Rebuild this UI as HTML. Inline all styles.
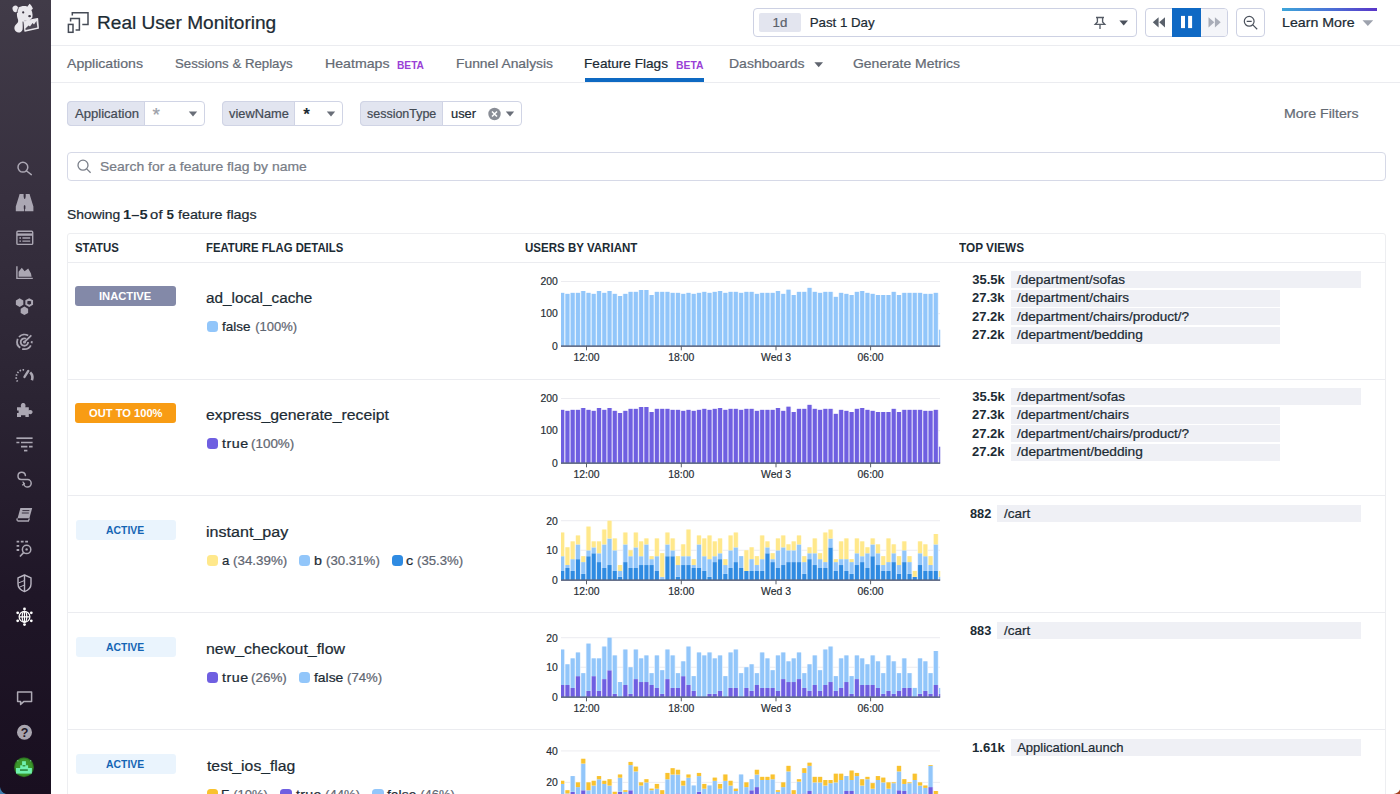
<!DOCTYPE html>
<html><head><meta charset="utf-8"><title>Real User Monitoring</title>
<style>
html,body{margin:0;padding:0;background:#fff;width:1400px;height:794px;overflow:hidden;}
body{width:1400px;height:794px;overflow:hidden;position:relative;font-family:"Liberation Sans",sans-serif;}
.t{position:absolute;white-space:nowrap;line-height:20px;-webkit-text-stroke:0.22px currentColor;}
.b{position:absolute;display:block;}
.root{position:absolute;left:0;top:0;width:1400px;height:794px;overflow:hidden;}
.ax{font-family:"Liberation Sans",sans-serif;font-size:10.4px;fill:#262d34;stroke:#262d34;stroke-width:0.18px;}
</style></head><body>
<div class="root">
<div class="b" style="left:0;top:0;width:51px;height:794px;background:linear-gradient(180deg,#413b48 0%,#37303f 25%,#2b2433 50%,#1f1627 75%,#190f20 100%)"></div>
<svg class="b" style="left:0;top:0" width="51" height="794" viewBox="0 0 51 794" fill="none" stroke="none"><g fill="#e9e7ec"><ellipse cx="15.5" cy="8.9" rx="2.9" ry="3.3" transform="rotate(-20 15.5 8.9)"/><path d="M27.4 6.4L29.6 3.8C31 5 32.4 7 32.9 8.8L30.8 10.6Z"/><path d="M18.6 7.6C21 5.6 26.6 5.2 29.6 7.6C32 9.8 33 14.4 32.4 17.4C31.4 19.6 28 20.8 24.6 20.6L23 22.4L22.6 29.4C21.8 32.6 18.2 33.4 16 31.6C13.8 29.6 14 26.4 16 24.6C17.8 23 18.6 21.6 18 19.6C16.4 16 16.6 10.6 18.6 7.6Z"/></g><path d="M18.3 8.2C17.4 10 17 11.6 17.2 13" stroke="#3f3946" stroke-width="0.9" fill="none"/><path d="M23.8 21.4L37.6 18.7L38.3 28.2L24.8 31.1Z" fill="#e9e7ec" stroke="#e9e7ec" stroke-width="1.2" stroke-linejoin="round"/><path d="M25.6 30L25.4 28.6L28.6 25.4L30 26.6L32.6 23L34 24.6L36.4 21L37.4 27.6Z" fill="#4d4754"/><path d="M22.9 21.6L23.9 31.6" stroke="#3f3946" stroke-width="0.8"/><circle cx="23.2" cy="12.4" r="1.1" fill="#3a3441"/><ellipse cx="29.6" cy="16.2" rx="1.4" ry="1.1" fill="#3a3441"/><g stroke="#aba7b3" stroke-width="1.5" stroke-linecap="round"><circle cx="22.9" cy="167.2" r="4.9"/><path d="M26.6 171L31.3 174.6"/></g><g fill="#aba7b3"><path d="M19.6 194H23.6V196.2L24.2 199.4V211.2H15.8V206.4L18.9 196.4Z"/><path d="M25.6 194H29.6L30.3 196.4L33.4 206.4V211.2H25V199.4L25.6 196.2Z"/><rect x="23" y="198.6" width="3.2" height="7"/></g><rect x="23.8" y="205.2" width="1.6" height="4.2" rx="0.8" fill="#37303f"/><path d="M24.6 194V198.4" stroke="#37303f" stroke-width="1.2"/><g stroke="#aba7b3" stroke-width="1.4"><rect x="16.9" y="231.2" width="15.8" height="13.2" rx="1"/><path d="M16.9 234.6H32.7" stroke-width="2.4"/><path d="M19.4 238H21M22.4 238H30.2M19.4 241.2H21M22.4 241.2H30.2" stroke-width="1.3"/></g><path d="M16.9 266.2V278.4H32.8" stroke="#aba7b3" stroke-width="1.4"/><path d="M18.6 276.8V271.8L21.8 267.8L24.6 271.2L28.2 268.6L31 273.4L31.6 276.8Z" fill="#aba7b3"/><path d="M23.32 304.75L19.60 306.90L15.88 304.75L15.88 300.45L19.60 298.30L23.32 300.45Z" fill="#aba7b3"/><path d="M28.12 312.95L24.40 315.10L20.68 312.95L20.68 308.65L24.40 306.50L28.12 308.65Z" fill="#aba7b3"/><path d="M32.06 304.25L29.20 305.90L26.34 304.25L26.34 300.95L29.20 299.30L32.06 300.95Z" stroke="#aba7b3" stroke-width="2"/><g stroke="#aba7b3" stroke-width="1.8" stroke-linecap="butt"><path d="M28.2 335.6A7.3 7.3 0 1 0 31.7 341.2" stroke-dasharray="10 2.2"/><path d="M26.2 338.8A3.7 3.7 0 1 0 28.1 342"/><path d="M24.6 341.9L30.8 335.8" stroke-width="1.8" stroke-linecap="round"/></g><circle cx="24.5" cy="342" r="1.5" fill="#aba7b3"/><g stroke="#aba7b3" stroke-linecap="butt"><path d="M17.6 381.6A7.4 7.4 0 0 1 24.4 369.9" stroke-width="1.7" stroke-dasharray="1.5 1.5"/><path d="M30.2 372.4A7.4 7.4 0 0 1 31.9 380.2" stroke-width="2.6"/><path d="M24.5 376.9L28.3 370.9" stroke-width="2.4" stroke-linecap="round"/></g><path d="M17 407.2H21.2C20.2 405 21.4 403 23.2 403C25 403 26.2 405 25.2 407.2H28.8V410.4C30.6 409.4 32.6 410.4 32.6 412.1C32.6 413.8 30.6 414.8 28.8 413.8V417H25.4V415.2H21V417H17V413H18.6V410.6H17Z" fill="#aba7b3"/><g stroke="#aba7b3" stroke-width="1.7"><path d="M16.4 438.2H32.6"/><path d="M16.4 442.5H19.4M21 442.5H32.6"/><path d="M21 446.6H27.4M29 446.6H32.6"/><path d="M24 450.6H27.4"/></g><path d="M25.4 475.6A3.7 3.7 0 1 0 21.2 479.6H27.6A3.7 3.7 0 1 1 23.8 483.4" stroke="#aba7b3" stroke-width="1.5" stroke-linecap="round"/><path d="M22.6 481.6L24.4 483.6L22.2 485.2" stroke="#aba7b3" stroke-width="1.2"/><path d="M20.4 508H32.2L29.4 518.2H17.6Z" fill="#aba7b3"/><path d="M17.4 518.4C16.6 519.6 17 521 18.2 521H28.4L29.4 518.6" stroke="#aba7b3" stroke-width="1.3"/><path d="M22.4 510.6H29.4M21.8 513H28.8" stroke="#2b2433" stroke-width="0.9"/><g stroke="#aba7b3"><path d="M16.6 541.6H19.2M20.8 541.6H23.6M25.2 541.6H28" stroke-width="1.8"/><path d="M16.6 545.8H19.2M16.6 550H19.2" stroke-width="1.8"/><circle cx="26.6" cy="549.4" r="4.2" stroke-width="1.5"/><path d="M23.6 552.6L20.4 556" stroke-width="1.7" stroke-linecap="round"/></g><circle cx="26.6" cy="549.4" r="1.2" fill="#aba7b3"/><g stroke="#b9b5c1" stroke-width="1.4" stroke-linejoin="round"><path d="M24.5 575L31 577.8V584C31 587.6 28.4 590.2 24.5 591.6C20.6 590.2 18 587.6 18 584V577.8Z"/><path d="M24.5 575V591.6"/><path d="M24.5 580.5L18.4 583M24.5 585L19.4 587.2" stroke-width="1"/></g><g stroke="#fff" stroke-width="1.2"><circle cx="24.5" cy="616.8" r="5.4"/><ellipse cx="24.5" cy="616.8" rx="2.3" ry="5.4"/><path d="M19.1 616.8H29.9M24.5 611.4V622.2"/></g><g fill="#fff"><circle cx="24.5" cy="609" r="1.4"/><circle cx="24.5" cy="624.6" r="1.4"/><circle cx="17.7" cy="612.8" r="1.4"/><circle cx="31.3" cy="612.8" r="1.4"/><circle cx="17.7" cy="620.8" r="1.4"/><circle cx="31.3" cy="620.8" r="1.4"/></g><path d="M17.6 692H31.6V701.4H24L20.6 704.4V701.4H17.6Z" stroke="#aeaab5" stroke-width="1.5" stroke-linejoin="round"/><circle cx="24.5" cy="732.2" r="7.5" fill="#a9a5af"/><text x="24.5" y="736.7" text-anchor="middle" font-family="Liberation Sans, sans-serif" font-weight="700" font-size="12.5" fill="#1f1726">?</text><defs><radialGradient id="av" cx="50%" cy="50%" r="50%"><stop offset="0" stop-color="#3f9e2e"/><stop offset="0.8" stop-color="#3a962a"/><stop offset="1" stop-color="#245f1c"/></radialGradient></defs><circle cx="24" cy="767.3" r="10" fill="url(#av)"/><g fill="#70f1ae"><rect x="22.1" y="761.2" width="3.8" height="4.2"/><rect x="20.2" y="765.3" width="7.9" height="3"/><rect x="16" y="768" width="15.9" height="5.6"/></g><rect x="20" y="769.4" width="7.8" height="1.3" fill="#1c6f22"/><rect x="22.7" y="765.2" width="2.6" height="1.2" fill="#2a8a30"/><rect x="17.2" y="760.3" width="1.2" height="1" fill="#9ff5c8" opacity="0.8"/><rect x="30" y="760.3" width="1.2" height="1" fill="#9ff5c8" opacity="0.8"/><path d="M0 794V787C0.6 790.6 2.6 793 6 794Z" fill="#3f7fb0"/></svg>
<svg class="b" style="left:60px;top:5px" width="50" height="35" viewBox="60 5 50 35" fill="none" stroke="#454b56" stroke-width="1.5" stroke-linejoin="miter"><path d="M72.3 15.6V12.8H88V24.4H82.3"/><path d="M70.6 21.4V18.4H79.4V30.1H75.6"/><rect x="68.4" y="24.4" width="4.6" height="7.9"/></svg>
<span class="t" style="left:97.37px;top:12.66px;font-size:18px;color:#1c2b34;transform:scaleX(1.0601);transform-origin:0 0;">Real User Monitoring</span>
<div class="b" style="left:51.00px;top:45.00px;width:1349.00px;height:1.00px;background:#ebecf0;"></div>
<div class="b" style="left:753.00px;top:8.00px;width:383.50px;height:29.00px;background:#fff;border:1px solid #cdd1e3;box-sizing:border-box;border-radius:4px;"></div>
<div class="b" style="left:759.00px;top:13.00px;width:42.00px;height:19.00px;background:#e3e5ef;border-radius:2px;"></div>
<span class="t" style="left:680.00px;width:200px;text-align:center;top:12.69px;font-size:13.3px;color:#5a616b;">1d</span>
<span class="t" style="left:809.63px;top:12.69px;font-size:13.3px;color:#1c2b34;">Past 1 Day</span>
<svg class="b" style="left:1090px;top:12px" width="20" height="20" viewBox="1090 12 20 20" fill="none" stroke="#565c66" stroke-width="1.35"><path d="M1096 17.5H1104M1097.4 17.5V22L1095.2 24.4H1104.8L1102.6 22V17.5M1100 24.4V29"/></svg>
<svg class="b" style="left:1118px;top:18px" width="12" height="10" viewBox="1118 18 12 10"><path d="M1119.4 20.6H1128L1123.7 25.6Z" fill="#4b515c"/></svg>
<div class="b" style="left:1145.00px;top:8.00px;width:83.30px;height:29.00px;background:#fff;border:1px solid #cdd1e3;box-sizing:border-box;border-radius:4px;"></div>
<div class="b" style="left:1200.70px;top:9.00px;width:26.60px;height:27.00px;background:#f4f5f9;border-radius:3px;"></div>
<div class="b" style="left:1172.00px;top:8.00px;width:28.70px;height:29.00px;background:#0f69c4;"></div>
<svg class="b" style="left:1145px;top:8px" width="84" height="28" viewBox="1145 8 84 28"><path d="M1158.6 17.2V27.4L1152.8 22.3ZM1165 17.2V27.4L1159.2 22.3Z" fill="#5a616b"/><rect x="1181" y="15.9" width="4" height="12.2" fill="#fff"/><rect x="1188.1" y="15.9" width="4" height="12.2" fill="#fff"/><path d="M1208.5 17.2V27.4L1214.3 22.3ZM1214.9 17.2V27.4L1220.7 22.3Z" fill="#a9adb8"/></svg>
<div class="b" style="left:1236.00px;top:8.00px;width:28.70px;height:29.00px;background:#fff;border:1px solid #cdd1e3;box-sizing:border-box;border-radius:4px;"></div>
<svg class="b" style="left:1236px;top:8px" width="29" height="28" viewBox="1236 8 29 28" fill="none" stroke="#4b515c" stroke-width="1.2"><circle cx="1249.2" cy="21.3" r="4.9"/><path d="M1252.8 24.9L1257.2 29.2M1246.7 21.3H1251.7"/></svg>
<div class="b" style="left:1282.3px;top:8px;width:94.4px;height:3px;background:linear-gradient(90deg,#3da5d9,#4a72d6 50%,#5a35c8)"></div>
<span class="t" style="left:1282.26px;top:12.69px;font-size:13.3px;color:#1c2b34;transform:scaleX(1.0672);transform-origin:0 0;">Learn More</span>
<svg class="b" style="left:1360px;top:18px" width="16" height="10" viewBox="1360 18 16 10"><path d="M1362.5 20.2H1373.2L1367.85 26Z" fill="#9da2ad"/></svg>
<span class="t" style="left:67.10px;top:54.43px;font-size:13.2px;color:#646a74;transform:scaleX(1.0681);transform-origin:0 0;">Applications</span>
<span class="t" style="left:175.40px;top:54.43px;font-size:13.2px;color:#646a74;transform:scaleX(1.0038);transform-origin:0 0;">Sessions &amp; Replays</span>
<span class="t" style="left:324.87px;top:54.43px;font-size:13.2px;color:#646a74;transform:scaleX(1.0737);transform-origin:0 0;">Heatmaps</span>
<span class="t" style="left:397.34px;top:55.06px;font-size:10.5px;color:#9a3fd6;font-weight:700;-webkit-text-stroke:0;transform:scaleX(0.9692);transform-origin:0 0;">BETA</span>
<span class="t" style="left:455.89px;top:54.43px;font-size:13.2px;color:#646a74;transform:scaleX(1.0501);transform-origin:0 0;">Funnel Analysis</span>
<span class="t" style="left:584.41px;top:54.43px;font-size:13.2px;color:#1c2b34;transform:scaleX(1.0322);transform-origin:0 0;">Feature Flags</span>
<span class="t" style="left:675.83px;top:55.06px;font-size:10.5px;color:#9a3fd6;font-weight:700;-webkit-text-stroke:0;transform:scaleX(0.9878);transform-origin:0 0;">BETA</span>
<div class="b" style="left:584.50px;top:78.00px;width:119.50px;height:4.00px;background:#0e69c2;"></div>
<span class="t" style="left:729.38px;top:54.43px;font-size:13.2px;color:#646a74;transform:scaleX(1.0628);transform-origin:0 0;">Dashboards</span>
<svg class="b" style="left:812px;top:60px" width="14" height="10" viewBox="812 60 14 10"><path d="M814.4 62.2H823L818.7 67.2Z" fill="#5f646e"/></svg>
<span class="t" style="left:852.80px;top:54.43px;font-size:13.2px;color:#646a74;transform:scaleX(1.0587);transform-origin:0 0;">Generate Metrics</span>
<div class="b" style="left:51.00px;top:82.00px;width:1349.00px;height:1.00px;background:#ebecf0;"></div>
<div class="b" style="left:67.00px;top:101.00px;width:138.20px;height:25.00px;background:#fff;border:1px solid #d0d4e5;box-sizing:border-box;border-radius:4px;"></div>
<div class="b" style="left:67.00px;top:101.00px;width:77.80px;height:25.00px;background:#e2e5f0;border:1px solid #d0d4e5;box-sizing:border-box;border-radius:4px 0 0 4px;"></div>
<span class="t" style="left:74.50px;top:104.10px;font-size:13px;color:#434a54;transform:scaleX(1.0060);transform-origin:0 0;">Application</span>
<span class="t" style="left:152.40px;top:105.02px;font-size:19px;color:#9a9ea8;">*</span>
<svg class="b" style="left:185.3px;top:108.3px" width="16" height="12" viewBox="185.3 108.3 16 12"><path d="M189.10000000000002 111.89999999999999H197.5L193.3 116.7Z" fill="#696e78"/></svg>
<div class="b" style="left:222.00px;top:101.00px;width:121.30px;height:25.00px;background:#fff;border:1px solid #d0d4e5;box-sizing:border-box;border-radius:4px;"></div>
<div class="b" style="left:222.00px;top:101.00px;width:73.00px;height:25.00px;background:#e2e5f0;border:1px solid #d0d4e5;box-sizing:border-box;border-radius:4px 0 0 4px;"></div>
<span class="t" style="left:228.74px;top:104.10px;font-size:13px;color:#434a54;transform:scaleX(0.9857);transform-origin:0 0;">viewName</span>
<span class="t" style="left:303.20px;top:105.11px;font-size:17px;color:#1c2b34;font-weight:700;-webkit-text-stroke:0;">*</span>
<svg class="b" style="left:323.3px;top:108.3px" width="16" height="12" viewBox="323.3 108.3 16 12"><path d="M327.1 111.89999999999999H335.5L331.3 116.7Z" fill="#696e78"/></svg>
<div class="b" style="left:360.00px;top:101.00px;width:161.80px;height:25.00px;background:#fff;border:1px solid #d0d4e5;box-sizing:border-box;border-radius:4px;"></div>
<div class="b" style="left:360.00px;top:101.00px;width:83.20px;height:25.00px;background:#e2e5f0;border:1px solid #d0d4e5;box-sizing:border-box;border-radius:4px 0 0 4px;"></div>
<span class="t" style="left:366.69px;top:104.10px;font-size:13px;color:#434a54;transform:scaleX(0.9589);transform-origin:0 0;">sessionType</span>
<span class="t" style="left:450.96px;top:104.10px;font-size:13px;color:#1c2b34;transform:scaleX(0.9899);transform-origin:0 0;">user</span>
<svg class="b" style="left:486px;top:105px" width="18" height="18" viewBox="486 105 18 18"><circle cx="494.5" cy="114" r="6.2" fill="#898d96"/><path d="M492 111.5L497 116.5M497 111.5L492 116.5" stroke="#fff" stroke-width="1.5"/></svg>
<svg class="b" style="left:502px;top:108.3px" width="16" height="12" viewBox="502 108.3 16 12"><path d="M505.8 111.89999999999999H514.2L510 116.7Z" fill="#696e78"/></svg>
<span class="t" style="left:1284.37px;top:104.03px;font-size:13.2px;color:#646a74;transform:scaleX(1.0707);transform-origin:0 0;">More Filters</span>
<div class="b" style="left:67.00px;top:152.00px;width:1319.00px;height:29.00px;background:#fff;border:1px solid #d6d9e7;box-sizing:border-box;border-radius:4px;"></div>
<svg class="b" style="left:74px;top:156px" width="20" height="20" viewBox="74 156 20 20" fill="none" stroke="#7a7f89" stroke-width="1.3"><circle cx="83" cy="165.2" r="5"/><path d="M86.7 168.9L90.6 172.8"/></svg>
<span class="t" style="left:99.97px;top:156.96px;font-size:13.4px;color:#787d87;transform:scaleX(1.0404);transform-origin:0 0;">Search for a feature flag by name</span>
<span class="t" style="left:66.98px;top:204.66px;font-size:13.4px;color:#1c2b34;transform:scaleX(1.0364);transform-origin:0 0;">Showing</span>
<span class="t" style="left:122.62px;top:204.66px;font-size:13.4px;color:#1c2b34;font-weight:700;-webkit-text-stroke:0;letter-spacing:0.096px;transform:scaleX(1.1000);transform-origin:0 0;">1–5</span>
<span class="t" style="left:150.41px;top:204.66px;font-size:13.4px;color:#1c2b34;letter-spacing:0.256px;transform:scaleX(1.1000);transform-origin:0 0;">of</span>
<span class="t" style="left:166.50px;top:204.66px;font-size:13.4px;color:#1c2b34;font-weight:700;-webkit-text-stroke:0;">5</span>
<span class="t" style="left:177.79px;top:204.66px;font-size:13.4px;color:#1c2b34;transform:scaleX(1.0671);transform-origin:0 0;">feature flags</span>
<div class="b" style="left:67.00px;top:233.00px;width:1319.00px;height:667.00px;background:#fff;border:1px solid #edeef1;box-sizing:border-box;border-radius:3px;"></div>
<span class="t" style="left:74.66px;top:237.64px;font-size:12px;color:#1c2b34;font-weight:700;-webkit-text-stroke:0;transform:scaleX(0.9467);transform-origin:0 0;">STATUS</span>
<span class="t" style="left:205.76px;top:237.64px;font-size:12px;color:#1c2b34;font-weight:700;-webkit-text-stroke:0;transform:scaleX(0.9425);transform-origin:0 0;">FEATURE FLAG DETAILS</span>
<span class="t" style="left:525.31px;top:237.64px;font-size:12px;color:#1c2b34;font-weight:700;-webkit-text-stroke:0;transform:scaleX(0.9609);transform-origin:0 0;">USERS BY VARIANT</span>
<span class="t" style="left:958.88px;top:237.64px;font-size:12px;color:#1c2b34;font-weight:700;-webkit-text-stroke:0;transform:scaleX(0.9817);transform-origin:0 0;">TOP VIEWS</span>
<div class="b" style="left:68.00px;top:262.00px;width:1317.00px;height:1.00px;background:#ebecf0;"></div>
<div class="b" style="left:68.00px;top:379.00px;width:1317.00px;height:1.00px;background:#ebecf0;"></div>
<div class="b" style="left:68.00px;top:495.00px;width:1317.00px;height:1.00px;background:#ebecf0;"></div>
<div class="b" style="left:68.00px;top:612.00px;width:1317.00px;height:1.00px;background:#ebecf0;"></div>
<div class="b" style="left:68.00px;top:729.00px;width:1317.00px;height:1.00px;background:#ebecf0;"></div>
<div class="b" style="left:75.00px;top:286.00px;width:101.00px;height:20.00px;background:#8389a8;border-radius:3px;"></div>
<span class="t" style="left:98.97px;top:286.49px;font-size:11px;color:#fff;font-weight:700;-webkit-text-stroke:0;transform:scaleX(1.0176);transform-origin:0 0;">INACTIVE</span>
<span class="t" style="left:206.19px;top:287.63px;font-size:15.5px;color:#1c2b34;transform:scaleX(0.9870);transform-origin:0 0;">ad_local_cache</span>
<div class="b" style="left:207.00px;top:320.90px;width:11.40px;height:11.40px;background:#92c6fa;border-radius:3.5px;"></div>
<span class="t" style="left:222.40px;top:316.50px;font-size:13px;color:#1c2b34;transform:scaleX(1.0331);transform-origin:0 0;">false</span>
<span class="t" style="left:255.22px;top:316.50px;font-size:13px;color:#5f6671;">(100%)</span>
<svg class="b" style="left:520px;top:262px" width="440" height="117" viewBox="520 262 440 117"><clipPath id="c262"><rect x="561" y="262" width="379.2" height="83.80000000000001"/></clipPath><text x="557.8" y="349.60" text-anchor="end" class="ax">0</text><rect x="561" y="313.15" width="379" height="1" fill="#ececf0"/><text x="557.8" y="317.45" text-anchor="end" class="ax">100</text><rect x="561" y="281.00" width="379" height="1" fill="#ececf0"/><text x="557.8" y="285.30" text-anchor="end" class="ax">200</text><g clip-path="url(#c262)"><rect x="559.54" y="292.86" width="5.263" height="52.94" fill="#deeefe"/><rect x="560.20" y="292.86" width="3.95" height="52.94" fill="#92c6fa"/><rect x="564.80" y="293.86" width="5.263" height="51.94" fill="#deeefe"/><rect x="565.46" y="293.86" width="3.95" height="51.94" fill="#92c6fa"/><rect x="570.07" y="292.86" width="5.263" height="52.94" fill="#deeefe"/><rect x="570.73" y="292.86" width="3.95" height="52.94" fill="#92c6fa"/><rect x="575.33" y="292.86" width="5.263" height="52.94" fill="#deeefe"/><rect x="575.99" y="292.86" width="3.95" height="52.94" fill="#92c6fa"/><rect x="580.59" y="291.00" width="5.263" height="54.80" fill="#deeefe"/><rect x="581.25" y="291.00" width="3.95" height="54.80" fill="#92c6fa"/><rect x="585.86" y="292.86" width="5.263" height="52.94" fill="#deeefe"/><rect x="586.52" y="292.86" width="3.95" height="52.94" fill="#92c6fa"/><rect x="591.12" y="293.86" width="5.263" height="51.94" fill="#deeefe"/><rect x="591.78" y="293.86" width="3.95" height="51.94" fill="#92c6fa"/><rect x="596.38" y="291.00" width="5.263" height="54.80" fill="#deeefe"/><rect x="597.04" y="291.00" width="3.95" height="54.80" fill="#92c6fa"/><rect x="601.64" y="292.86" width="5.263" height="52.94" fill="#deeefe"/><rect x="602.30" y="292.86" width="3.95" height="52.94" fill="#92c6fa"/><rect x="606.91" y="291.00" width="5.263" height="54.80" fill="#deeefe"/><rect x="607.57" y="291.00" width="3.95" height="54.80" fill="#92c6fa"/><rect x="612.17" y="293.86" width="5.263" height="51.94" fill="#deeefe"/><rect x="612.83" y="293.86" width="3.95" height="51.94" fill="#92c6fa"/><rect x="617.43" y="296.00" width="5.263" height="49.80" fill="#deeefe"/><rect x="618.09" y="296.00" width="3.95" height="49.80" fill="#92c6fa"/><rect x="622.70" y="293.86" width="5.263" height="51.94" fill="#deeefe"/><rect x="623.36" y="293.86" width="3.95" height="51.94" fill="#92c6fa"/><rect x="627.96" y="291.86" width="5.263" height="53.94" fill="#deeefe"/><rect x="628.62" y="291.86" width="3.95" height="53.94" fill="#92c6fa"/><rect x="633.22" y="291.86" width="5.263" height="53.94" fill="#deeefe"/><rect x="633.88" y="291.86" width="3.95" height="53.94" fill="#92c6fa"/><rect x="638.49" y="290.00" width="5.263" height="55.80" fill="#deeefe"/><rect x="639.14" y="290.00" width="3.95" height="55.80" fill="#92c6fa"/><rect x="643.75" y="290.00" width="5.263" height="55.80" fill="#deeefe"/><rect x="644.41" y="290.00" width="3.95" height="55.80" fill="#92c6fa"/><rect x="649.01" y="295.00" width="5.263" height="50.80" fill="#deeefe"/><rect x="649.67" y="295.00" width="3.95" height="50.80" fill="#92c6fa"/><rect x="654.27" y="291.86" width="5.263" height="53.94" fill="#deeefe"/><rect x="654.93" y="291.86" width="3.95" height="53.94" fill="#92c6fa"/><rect x="659.54" y="291.86" width="5.263" height="53.94" fill="#deeefe"/><rect x="660.20" y="291.86" width="3.95" height="53.94" fill="#92c6fa"/><rect x="664.80" y="291.86" width="5.263" height="53.94" fill="#deeefe"/><rect x="665.46" y="291.86" width="3.95" height="53.94" fill="#92c6fa"/><rect x="670.06" y="292.86" width="5.263" height="52.94" fill="#deeefe"/><rect x="670.72" y="292.86" width="3.95" height="52.94" fill="#92c6fa"/><rect x="675.33" y="292.86" width="5.263" height="52.94" fill="#deeefe"/><rect x="675.99" y="292.86" width="3.95" height="52.94" fill="#92c6fa"/><rect x="680.59" y="293.86" width="5.263" height="51.94" fill="#deeefe"/><rect x="681.25" y="293.86" width="3.95" height="51.94" fill="#92c6fa"/><rect x="685.85" y="292.86" width="5.263" height="52.94" fill="#deeefe"/><rect x="686.51" y="292.86" width="3.95" height="52.94" fill="#92c6fa"/><rect x="691.12" y="293.86" width="5.263" height="51.94" fill="#deeefe"/><rect x="691.78" y="293.86" width="3.95" height="51.94" fill="#92c6fa"/><rect x="696.38" y="292.86" width="5.263" height="52.94" fill="#deeefe"/><rect x="697.04" y="292.86" width="3.95" height="52.94" fill="#92c6fa"/><rect x="701.64" y="291.86" width="5.263" height="53.94" fill="#deeefe"/><rect x="702.30" y="291.86" width="3.95" height="53.94" fill="#92c6fa"/><rect x="706.90" y="292.86" width="5.263" height="52.94" fill="#deeefe"/><rect x="707.56" y="292.86" width="3.95" height="52.94" fill="#92c6fa"/><rect x="712.17" y="291.86" width="5.263" height="53.94" fill="#deeefe"/><rect x="712.83" y="291.86" width="3.95" height="53.94" fill="#92c6fa"/><rect x="717.43" y="291.00" width="5.263" height="54.80" fill="#deeefe"/><rect x="718.09" y="291.00" width="3.95" height="54.80" fill="#92c6fa"/><rect x="722.69" y="292.86" width="5.263" height="52.94" fill="#deeefe"/><rect x="723.35" y="292.86" width="3.95" height="52.94" fill="#92c6fa"/><rect x="727.96" y="291.86" width="5.263" height="53.94" fill="#deeefe"/><rect x="728.62" y="291.86" width="3.95" height="53.94" fill="#92c6fa"/><rect x="733.22" y="291.86" width="5.263" height="53.94" fill="#deeefe"/><rect x="733.88" y="291.86" width="3.95" height="53.94" fill="#92c6fa"/><rect x="738.48" y="292.86" width="5.263" height="52.94" fill="#deeefe"/><rect x="739.14" y="292.86" width="3.95" height="52.94" fill="#92c6fa"/><rect x="743.75" y="291.86" width="5.263" height="53.94" fill="#deeefe"/><rect x="744.40" y="291.86" width="3.95" height="53.94" fill="#92c6fa"/><rect x="749.01" y="291.86" width="5.263" height="53.94" fill="#deeefe"/><rect x="749.67" y="291.86" width="3.95" height="53.94" fill="#92c6fa"/><rect x="754.27" y="293.86" width="5.263" height="51.94" fill="#deeefe"/><rect x="754.93" y="293.86" width="3.95" height="51.94" fill="#92c6fa"/><rect x="759.53" y="292.86" width="5.263" height="52.94" fill="#deeefe"/><rect x="760.19" y="292.86" width="3.95" height="52.94" fill="#92c6fa"/><rect x="764.80" y="292.86" width="5.263" height="52.94" fill="#deeefe"/><rect x="765.46" y="292.86" width="3.95" height="52.94" fill="#92c6fa"/><rect x="770.06" y="292.86" width="5.263" height="52.94" fill="#deeefe"/><rect x="770.72" y="292.86" width="3.95" height="52.94" fill="#92c6fa"/><rect x="775.32" y="291.00" width="5.263" height="54.80" fill="#deeefe"/><rect x="775.98" y="291.00" width="3.95" height="54.80" fill="#92c6fa"/><rect x="780.59" y="293.86" width="5.263" height="51.94" fill="#deeefe"/><rect x="781.25" y="293.86" width="3.95" height="51.94" fill="#92c6fa"/><rect x="785.85" y="289.71" width="5.263" height="56.09" fill="#deeefe"/><rect x="786.51" y="289.71" width="3.95" height="56.09" fill="#92c6fa"/><rect x="791.11" y="295.00" width="5.263" height="50.80" fill="#deeefe"/><rect x="791.77" y="295.00" width="3.95" height="50.80" fill="#92c6fa"/><rect x="796.38" y="291.86" width="5.263" height="53.94" fill="#deeefe"/><rect x="797.04" y="291.86" width="3.95" height="53.94" fill="#92c6fa"/><rect x="801.64" y="291.86" width="5.263" height="53.94" fill="#deeefe"/><rect x="802.30" y="291.86" width="3.95" height="53.94" fill="#92c6fa"/><rect x="806.90" y="287.86" width="5.263" height="57.94" fill="#deeefe"/><rect x="807.56" y="287.86" width="3.95" height="57.94" fill="#92c6fa"/><rect x="812.16" y="291.86" width="5.263" height="53.94" fill="#deeefe"/><rect x="812.82" y="291.86" width="3.95" height="53.94" fill="#92c6fa"/><rect x="817.43" y="292.86" width="5.263" height="52.94" fill="#deeefe"/><rect x="818.09" y="292.86" width="3.95" height="52.94" fill="#92c6fa"/><rect x="822.69" y="291.86" width="5.263" height="53.94" fill="#deeefe"/><rect x="823.35" y="291.86" width="3.95" height="53.94" fill="#92c6fa"/><rect x="827.95" y="291.86" width="5.263" height="53.94" fill="#deeefe"/><rect x="828.61" y="291.86" width="3.95" height="53.94" fill="#92c6fa"/><rect x="833.22" y="296.86" width="5.263" height="48.94" fill="#deeefe"/><rect x="833.88" y="296.86" width="3.95" height="48.94" fill="#92c6fa"/><rect x="838.48" y="292.86" width="5.263" height="52.94" fill="#deeefe"/><rect x="839.14" y="292.86" width="3.95" height="52.94" fill="#92c6fa"/><rect x="843.74" y="293.86" width="5.263" height="51.94" fill="#deeefe"/><rect x="844.40" y="293.86" width="3.95" height="51.94" fill="#92c6fa"/><rect x="849.00" y="295.00" width="5.263" height="50.80" fill="#deeefe"/><rect x="849.66" y="295.00" width="3.95" height="50.80" fill="#92c6fa"/><rect x="854.27" y="291.86" width="5.263" height="53.94" fill="#deeefe"/><rect x="854.93" y="291.86" width="3.95" height="53.94" fill="#92c6fa"/><rect x="859.53" y="291.00" width="5.263" height="54.80" fill="#deeefe"/><rect x="860.19" y="291.00" width="3.95" height="54.80" fill="#92c6fa"/><rect x="864.79" y="292.86" width="5.263" height="52.94" fill="#deeefe"/><rect x="865.45" y="292.86" width="3.95" height="52.94" fill="#92c6fa"/><rect x="870.06" y="293.86" width="5.263" height="51.94" fill="#deeefe"/><rect x="870.72" y="293.86" width="3.95" height="51.94" fill="#92c6fa"/><rect x="875.32" y="295.00" width="5.263" height="50.80" fill="#deeefe"/><rect x="875.98" y="295.00" width="3.95" height="50.80" fill="#92c6fa"/><rect x="880.58" y="295.00" width="5.263" height="50.80" fill="#deeefe"/><rect x="881.24" y="295.00" width="3.95" height="50.80" fill="#92c6fa"/><rect x="885.85" y="295.00" width="5.263" height="50.80" fill="#deeefe"/><rect x="886.51" y="295.00" width="3.95" height="50.80" fill="#92c6fa"/><rect x="891.11" y="291.86" width="5.263" height="53.94" fill="#deeefe"/><rect x="891.77" y="291.86" width="3.95" height="53.94" fill="#92c6fa"/><rect x="896.37" y="295.00" width="5.263" height="50.80" fill="#deeefe"/><rect x="897.03" y="295.00" width="3.95" height="50.80" fill="#92c6fa"/><rect x="901.64" y="292.86" width="5.263" height="52.94" fill="#deeefe"/><rect x="902.30" y="292.86" width="3.95" height="52.94" fill="#92c6fa"/><rect x="906.90" y="292.86" width="5.263" height="52.94" fill="#deeefe"/><rect x="907.56" y="292.86" width="3.95" height="52.94" fill="#92c6fa"/><rect x="912.16" y="292.86" width="5.263" height="52.94" fill="#deeefe"/><rect x="912.82" y="292.86" width="3.95" height="52.94" fill="#92c6fa"/><rect x="917.42" y="292.86" width="5.263" height="52.94" fill="#deeefe"/><rect x="918.08" y="292.86" width="3.95" height="52.94" fill="#92c6fa"/><rect x="922.69" y="293.86" width="5.263" height="51.94" fill="#deeefe"/><rect x="923.35" y="293.86" width="3.95" height="51.94" fill="#92c6fa"/><rect x="927.95" y="293.86" width="5.263" height="51.94" fill="#deeefe"/><rect x="928.61" y="293.86" width="3.95" height="51.94" fill="#92c6fa"/><rect x="933.21" y="292.86" width="5.263" height="52.94" fill="#deeefe"/><rect x="933.87" y="292.86" width="3.95" height="52.94" fill="#92c6fa"/><rect x="938.48" y="329.73" width="5.263" height="16.07" fill="#deeefe"/><rect x="939.14" y="329.73" width="3.95" height="16.07" fill="#92c6fa"/></g><rect x="561" y="345.30" width="379.2" height="1.7" fill="#26355a" opacity="0.7"/><rect x="586.0" y="345.80" width="1" height="4.5" fill="#5b616c"/><text x="586.5" y="361.20" text-anchor="middle" class="ax">12:00</text><rect x="680.8" y="345.80" width="1" height="4.5" fill="#5b616c"/><text x="681.3" y="361.20" text-anchor="middle" class="ax">18:00</text><rect x="775.5" y="345.80" width="1" height="4.5" fill="#5b616c"/><text x="776" y="361.20" text-anchor="middle" class="ax">Wed 3</text><rect x="870.1" y="345.80" width="1" height="4.5" fill="#5b616c"/><text x="870.6" y="361.20" text-anchor="middle" class="ax">06:00</text></svg>
<div class="b" style="left:1011.00px;top:271.00px;width:350.40px;height:17.00px;background:#eff0f5;"></div>
<span class="t" style="left:972.18px;top:269.70px;font-size:13px;color:#1c2b34;font-weight:700;-webkit-text-stroke:0;">35.5k</span>
<span class="t" style="left:1016.90px;top:269.70px;font-size:13px;color:#1c2b34;transform:scaleX(1.0385);transform-origin:0 0;">/department/sofas</span>
<div class="b" style="left:1011.00px;top:289.50px;width:269.40px;height:17.00px;background:#eff0f5;"></div>
<span class="t" style="left:972.04px;top:288.20px;font-size:13px;color:#1c2b34;font-weight:700;-webkit-text-stroke:0;">27.3k</span>
<span class="t" style="left:1016.90px;top:288.20px;font-size:13px;color:#1c2b34;transform:scaleX(1.0403);transform-origin:0 0;">/department/chairs</span>
<div class="b" style="left:1011.00px;top:308.00px;width:268.50px;height:17.00px;background:#eff0f5;"></div>
<span class="t" style="left:972.04px;top:306.70px;font-size:13px;color:#1c2b34;font-weight:700;-webkit-text-stroke:0;">27.2k</span>
<span class="t" style="left:1016.90px;top:306.70px;font-size:13px;color:#1c2b34;transform:scaleX(1.0398);transform-origin:0 0;">/department/chairs/product/?</span>
<div class="b" style="left:1011.00px;top:326.50px;width:268.50px;height:17.00px;background:#eff0f5;"></div>
<span class="t" style="left:972.04px;top:325.20px;font-size:13px;color:#1c2b34;font-weight:700;-webkit-text-stroke:0;">27.2k</span>
<span class="t" style="left:1016.90px;top:325.20px;font-size:13px;color:#1c2b34;transform:scaleX(1.0555);transform-origin:0 0;">/department/bedding</span>
<div class="b" style="left:75.00px;top:403.00px;width:101.00px;height:20.00px;background:#f89c14;border-radius:3px;"></div>
<span class="t" style="left:88.85px;top:403.49px;font-size:11px;color:#fff;font-weight:700;-webkit-text-stroke:0;transform:scaleX(1.0135);transform-origin:0 0;">OUT TO 100%</span>
<span class="t" style="left:206.17px;top:404.63px;font-size:15.5px;color:#1c2b34;transform:scaleX(1.0208);transform-origin:0 0;">express_generate_receipt</span>
<div class="b" style="left:207.00px;top:437.90px;width:11.40px;height:11.40px;background:#6f5fe1;border-radius:3.5px;"></div>
<span class="t" style="left:222.09px;top:433.50px;font-size:13px;color:#1c2b34;letter-spacing:0.452px;transform:scaleX(1.1000);transform-origin:0 0;">true</span>
<span class="t" style="left:251.39px;top:433.50px;font-size:13px;color:#5f6671;transform:scaleX(1.0323);transform-origin:0 0;">(100%)</span>
<svg class="b" style="left:520px;top:379px" width="440" height="117" viewBox="520 379 440 117"><clipPath id="c379"><rect x="561" y="379" width="379.2" height="83.80000000000001"/></clipPath><text x="557.8" y="466.60" text-anchor="end" class="ax">0</text><rect x="561" y="430.15" width="379" height="1" fill="#ececf0"/><text x="557.8" y="434.45" text-anchor="end" class="ax">100</text><rect x="561" y="398.00" width="379" height="1" fill="#ececf0"/><text x="557.8" y="402.30" text-anchor="end" class="ax">200</text><g clip-path="url(#c379)"><rect x="559.54" y="409.86" width="5.263" height="52.94" fill="#d4cff6"/><rect x="560.20" y="409.86" width="3.95" height="52.94" fill="#6f5fe1"/><rect x="564.80" y="410.86" width="5.263" height="51.94" fill="#d4cff6"/><rect x="565.46" y="410.86" width="3.95" height="51.94" fill="#6f5fe1"/><rect x="570.07" y="409.86" width="5.263" height="52.94" fill="#d4cff6"/><rect x="570.73" y="409.86" width="3.95" height="52.94" fill="#6f5fe1"/><rect x="575.33" y="409.86" width="5.263" height="52.94" fill="#d4cff6"/><rect x="575.99" y="409.86" width="3.95" height="52.94" fill="#6f5fe1"/><rect x="580.59" y="408.00" width="5.263" height="54.80" fill="#d4cff6"/><rect x="581.25" y="408.00" width="3.95" height="54.80" fill="#6f5fe1"/><rect x="585.86" y="409.86" width="5.263" height="52.94" fill="#d4cff6"/><rect x="586.52" y="409.86" width="3.95" height="52.94" fill="#6f5fe1"/><rect x="591.12" y="410.86" width="5.263" height="51.94" fill="#d4cff6"/><rect x="591.78" y="410.86" width="3.95" height="51.94" fill="#6f5fe1"/><rect x="596.38" y="408.00" width="5.263" height="54.80" fill="#d4cff6"/><rect x="597.04" y="408.00" width="3.95" height="54.80" fill="#6f5fe1"/><rect x="601.64" y="409.86" width="5.263" height="52.94" fill="#d4cff6"/><rect x="602.30" y="409.86" width="3.95" height="52.94" fill="#6f5fe1"/><rect x="606.91" y="408.00" width="5.263" height="54.80" fill="#d4cff6"/><rect x="607.57" y="408.00" width="3.95" height="54.80" fill="#6f5fe1"/><rect x="612.17" y="410.86" width="5.263" height="51.94" fill="#d4cff6"/><rect x="612.83" y="410.86" width="3.95" height="51.94" fill="#6f5fe1"/><rect x="617.43" y="413.00" width="5.263" height="49.80" fill="#d4cff6"/><rect x="618.09" y="413.00" width="3.95" height="49.80" fill="#6f5fe1"/><rect x="622.70" y="410.86" width="5.263" height="51.94" fill="#d4cff6"/><rect x="623.36" y="410.86" width="3.95" height="51.94" fill="#6f5fe1"/><rect x="627.96" y="408.86" width="5.263" height="53.94" fill="#d4cff6"/><rect x="628.62" y="408.86" width="3.95" height="53.94" fill="#6f5fe1"/><rect x="633.22" y="408.86" width="5.263" height="53.94" fill="#d4cff6"/><rect x="633.88" y="408.86" width="3.95" height="53.94" fill="#6f5fe1"/><rect x="638.49" y="407.00" width="5.263" height="55.80" fill="#d4cff6"/><rect x="639.14" y="407.00" width="3.95" height="55.80" fill="#6f5fe1"/><rect x="643.75" y="407.00" width="5.263" height="55.80" fill="#d4cff6"/><rect x="644.41" y="407.00" width="3.95" height="55.80" fill="#6f5fe1"/><rect x="649.01" y="412.00" width="5.263" height="50.80" fill="#d4cff6"/><rect x="649.67" y="412.00" width="3.95" height="50.80" fill="#6f5fe1"/><rect x="654.27" y="408.86" width="5.263" height="53.94" fill="#d4cff6"/><rect x="654.93" y="408.86" width="3.95" height="53.94" fill="#6f5fe1"/><rect x="659.54" y="408.86" width="5.263" height="53.94" fill="#d4cff6"/><rect x="660.20" y="408.86" width="3.95" height="53.94" fill="#6f5fe1"/><rect x="664.80" y="408.86" width="5.263" height="53.94" fill="#d4cff6"/><rect x="665.46" y="408.86" width="3.95" height="53.94" fill="#6f5fe1"/><rect x="670.06" y="409.86" width="5.263" height="52.94" fill="#d4cff6"/><rect x="670.72" y="409.86" width="3.95" height="52.94" fill="#6f5fe1"/><rect x="675.33" y="409.86" width="5.263" height="52.94" fill="#d4cff6"/><rect x="675.99" y="409.86" width="3.95" height="52.94" fill="#6f5fe1"/><rect x="680.59" y="410.86" width="5.263" height="51.94" fill="#d4cff6"/><rect x="681.25" y="410.86" width="3.95" height="51.94" fill="#6f5fe1"/><rect x="685.85" y="409.86" width="5.263" height="52.94" fill="#d4cff6"/><rect x="686.51" y="409.86" width="3.95" height="52.94" fill="#6f5fe1"/><rect x="691.12" y="410.86" width="5.263" height="51.94" fill="#d4cff6"/><rect x="691.78" y="410.86" width="3.95" height="51.94" fill="#6f5fe1"/><rect x="696.38" y="409.86" width="5.263" height="52.94" fill="#d4cff6"/><rect x="697.04" y="409.86" width="3.95" height="52.94" fill="#6f5fe1"/><rect x="701.64" y="408.86" width="5.263" height="53.94" fill="#d4cff6"/><rect x="702.30" y="408.86" width="3.95" height="53.94" fill="#6f5fe1"/><rect x="706.90" y="409.86" width="5.263" height="52.94" fill="#d4cff6"/><rect x="707.56" y="409.86" width="3.95" height="52.94" fill="#6f5fe1"/><rect x="712.17" y="408.86" width="5.263" height="53.94" fill="#d4cff6"/><rect x="712.83" y="408.86" width="3.95" height="53.94" fill="#6f5fe1"/><rect x="717.43" y="408.00" width="5.263" height="54.80" fill="#d4cff6"/><rect x="718.09" y="408.00" width="3.95" height="54.80" fill="#6f5fe1"/><rect x="722.69" y="409.86" width="5.263" height="52.94" fill="#d4cff6"/><rect x="723.35" y="409.86" width="3.95" height="52.94" fill="#6f5fe1"/><rect x="727.96" y="408.86" width="5.263" height="53.94" fill="#d4cff6"/><rect x="728.62" y="408.86" width="3.95" height="53.94" fill="#6f5fe1"/><rect x="733.22" y="408.86" width="5.263" height="53.94" fill="#d4cff6"/><rect x="733.88" y="408.86" width="3.95" height="53.94" fill="#6f5fe1"/><rect x="738.48" y="409.86" width="5.263" height="52.94" fill="#d4cff6"/><rect x="739.14" y="409.86" width="3.95" height="52.94" fill="#6f5fe1"/><rect x="743.75" y="408.86" width="5.263" height="53.94" fill="#d4cff6"/><rect x="744.40" y="408.86" width="3.95" height="53.94" fill="#6f5fe1"/><rect x="749.01" y="408.86" width="5.263" height="53.94" fill="#d4cff6"/><rect x="749.67" y="408.86" width="3.95" height="53.94" fill="#6f5fe1"/><rect x="754.27" y="410.86" width="5.263" height="51.94" fill="#d4cff6"/><rect x="754.93" y="410.86" width="3.95" height="51.94" fill="#6f5fe1"/><rect x="759.53" y="409.86" width="5.263" height="52.94" fill="#d4cff6"/><rect x="760.19" y="409.86" width="3.95" height="52.94" fill="#6f5fe1"/><rect x="764.80" y="409.86" width="5.263" height="52.94" fill="#d4cff6"/><rect x="765.46" y="409.86" width="3.95" height="52.94" fill="#6f5fe1"/><rect x="770.06" y="409.86" width="5.263" height="52.94" fill="#d4cff6"/><rect x="770.72" y="409.86" width="3.95" height="52.94" fill="#6f5fe1"/><rect x="775.32" y="408.00" width="5.263" height="54.80" fill="#d4cff6"/><rect x="775.98" y="408.00" width="3.95" height="54.80" fill="#6f5fe1"/><rect x="780.59" y="410.86" width="5.263" height="51.94" fill="#d4cff6"/><rect x="781.25" y="410.86" width="3.95" height="51.94" fill="#6f5fe1"/><rect x="785.85" y="406.71" width="5.263" height="56.09" fill="#d4cff6"/><rect x="786.51" y="406.71" width="3.95" height="56.09" fill="#6f5fe1"/><rect x="791.11" y="412.00" width="5.263" height="50.80" fill="#d4cff6"/><rect x="791.77" y="412.00" width="3.95" height="50.80" fill="#6f5fe1"/><rect x="796.38" y="408.86" width="5.263" height="53.94" fill="#d4cff6"/><rect x="797.04" y="408.86" width="3.95" height="53.94" fill="#6f5fe1"/><rect x="801.64" y="408.86" width="5.263" height="53.94" fill="#d4cff6"/><rect x="802.30" y="408.86" width="3.95" height="53.94" fill="#6f5fe1"/><rect x="806.90" y="404.86" width="5.263" height="57.94" fill="#d4cff6"/><rect x="807.56" y="404.86" width="3.95" height="57.94" fill="#6f5fe1"/><rect x="812.16" y="408.86" width="5.263" height="53.94" fill="#d4cff6"/><rect x="812.82" y="408.86" width="3.95" height="53.94" fill="#6f5fe1"/><rect x="817.43" y="409.86" width="5.263" height="52.94" fill="#d4cff6"/><rect x="818.09" y="409.86" width="3.95" height="52.94" fill="#6f5fe1"/><rect x="822.69" y="408.86" width="5.263" height="53.94" fill="#d4cff6"/><rect x="823.35" y="408.86" width="3.95" height="53.94" fill="#6f5fe1"/><rect x="827.95" y="408.86" width="5.263" height="53.94" fill="#d4cff6"/><rect x="828.61" y="408.86" width="3.95" height="53.94" fill="#6f5fe1"/><rect x="833.22" y="413.86" width="5.263" height="48.94" fill="#d4cff6"/><rect x="833.88" y="413.86" width="3.95" height="48.94" fill="#6f5fe1"/><rect x="838.48" y="409.86" width="5.263" height="52.94" fill="#d4cff6"/><rect x="839.14" y="409.86" width="3.95" height="52.94" fill="#6f5fe1"/><rect x="843.74" y="410.86" width="5.263" height="51.94" fill="#d4cff6"/><rect x="844.40" y="410.86" width="3.95" height="51.94" fill="#6f5fe1"/><rect x="849.00" y="412.00" width="5.263" height="50.80" fill="#d4cff6"/><rect x="849.66" y="412.00" width="3.95" height="50.80" fill="#6f5fe1"/><rect x="854.27" y="408.86" width="5.263" height="53.94" fill="#d4cff6"/><rect x="854.93" y="408.86" width="3.95" height="53.94" fill="#6f5fe1"/><rect x="859.53" y="408.00" width="5.263" height="54.80" fill="#d4cff6"/><rect x="860.19" y="408.00" width="3.95" height="54.80" fill="#6f5fe1"/><rect x="864.79" y="409.86" width="5.263" height="52.94" fill="#d4cff6"/><rect x="865.45" y="409.86" width="3.95" height="52.94" fill="#6f5fe1"/><rect x="870.06" y="410.86" width="5.263" height="51.94" fill="#d4cff6"/><rect x="870.72" y="410.86" width="3.95" height="51.94" fill="#6f5fe1"/><rect x="875.32" y="412.00" width="5.263" height="50.80" fill="#d4cff6"/><rect x="875.98" y="412.00" width="3.95" height="50.80" fill="#6f5fe1"/><rect x="880.58" y="412.00" width="5.263" height="50.80" fill="#d4cff6"/><rect x="881.24" y="412.00" width="3.95" height="50.80" fill="#6f5fe1"/><rect x="885.85" y="412.00" width="5.263" height="50.80" fill="#d4cff6"/><rect x="886.51" y="412.00" width="3.95" height="50.80" fill="#6f5fe1"/><rect x="891.11" y="408.86" width="5.263" height="53.94" fill="#d4cff6"/><rect x="891.77" y="408.86" width="3.95" height="53.94" fill="#6f5fe1"/><rect x="896.37" y="412.00" width="5.263" height="50.80" fill="#d4cff6"/><rect x="897.03" y="412.00" width="3.95" height="50.80" fill="#6f5fe1"/><rect x="901.64" y="409.86" width="5.263" height="52.94" fill="#d4cff6"/><rect x="902.30" y="409.86" width="3.95" height="52.94" fill="#6f5fe1"/><rect x="906.90" y="409.86" width="5.263" height="52.94" fill="#d4cff6"/><rect x="907.56" y="409.86" width="3.95" height="52.94" fill="#6f5fe1"/><rect x="912.16" y="409.86" width="5.263" height="52.94" fill="#d4cff6"/><rect x="912.82" y="409.86" width="3.95" height="52.94" fill="#6f5fe1"/><rect x="917.42" y="409.86" width="5.263" height="52.94" fill="#d4cff6"/><rect x="918.08" y="409.86" width="3.95" height="52.94" fill="#6f5fe1"/><rect x="922.69" y="410.86" width="5.263" height="51.94" fill="#d4cff6"/><rect x="923.35" y="410.86" width="3.95" height="51.94" fill="#6f5fe1"/><rect x="927.95" y="410.86" width="5.263" height="51.94" fill="#d4cff6"/><rect x="928.61" y="410.86" width="3.95" height="51.94" fill="#6f5fe1"/><rect x="933.21" y="409.86" width="5.263" height="52.94" fill="#d4cff6"/><rect x="933.87" y="409.86" width="3.95" height="52.94" fill="#6f5fe1"/><rect x="938.48" y="446.73" width="5.263" height="16.07" fill="#d4cff6"/><rect x="939.14" y="446.73" width="3.95" height="16.07" fill="#6f5fe1"/></g><rect x="561" y="462.30" width="379.2" height="1.7" fill="#26355a" opacity="0.7"/><rect x="586.0" y="462.80" width="1" height="4.5" fill="#5b616c"/><text x="586.5" y="478.20" text-anchor="middle" class="ax">12:00</text><rect x="680.8" y="462.80" width="1" height="4.5" fill="#5b616c"/><text x="681.3" y="478.20" text-anchor="middle" class="ax">18:00</text><rect x="775.5" y="462.80" width="1" height="4.5" fill="#5b616c"/><text x="776" y="478.20" text-anchor="middle" class="ax">Wed 3</text><rect x="870.1" y="462.80" width="1" height="4.5" fill="#5b616c"/><text x="870.6" y="478.20" text-anchor="middle" class="ax">06:00</text></svg>
<div class="b" style="left:1011.00px;top:388.00px;width:350.40px;height:17.00px;background:#eff0f5;"></div>
<span class="t" style="left:972.18px;top:386.70px;font-size:13px;color:#1c2b34;font-weight:700;-webkit-text-stroke:0;">35.5k</span>
<span class="t" style="left:1016.90px;top:386.70px;font-size:13px;color:#1c2b34;transform:scaleX(1.0385);transform-origin:0 0;">/department/sofas</span>
<div class="b" style="left:1011.00px;top:406.50px;width:269.40px;height:17.00px;background:#eff0f5;"></div>
<span class="t" style="left:972.04px;top:405.20px;font-size:13px;color:#1c2b34;font-weight:700;-webkit-text-stroke:0;">27.3k</span>
<span class="t" style="left:1016.90px;top:405.20px;font-size:13px;color:#1c2b34;transform:scaleX(1.0403);transform-origin:0 0;">/department/chairs</span>
<div class="b" style="left:1011.00px;top:425.00px;width:268.50px;height:17.00px;background:#eff0f5;"></div>
<span class="t" style="left:972.04px;top:423.70px;font-size:13px;color:#1c2b34;font-weight:700;-webkit-text-stroke:0;">27.2k</span>
<span class="t" style="left:1016.90px;top:423.70px;font-size:13px;color:#1c2b34;transform:scaleX(1.0398);transform-origin:0 0;">/department/chairs/product/?</span>
<div class="b" style="left:1011.00px;top:443.50px;width:268.50px;height:17.00px;background:#eff0f5;"></div>
<span class="t" style="left:972.04px;top:442.20px;font-size:13px;color:#1c2b34;font-weight:700;-webkit-text-stroke:0;">27.2k</span>
<span class="t" style="left:1016.90px;top:442.20px;font-size:13px;color:#1c2b34;transform:scaleX(1.0555);transform-origin:0 0;">/department/bedding</span>
<div class="b" style="left:75.50px;top:520.00px;width:100.50px;height:20.00px;background:#eaf4fd;border-radius:3px;"></div>
<span class="t" style="left:106.44px;top:520.49px;font-size:11px;color:#1464b4;font-weight:700;-webkit-text-stroke:0;transform:scaleX(0.9457);transform-origin:0 0;">ACTIVE</span>
<span class="t" style="left:205.75px;top:521.63px;font-size:15.5px;color:#1c2b34;transform:scaleX(1.0374);transform-origin:0 0;">instant_pay</span>
<div class="b" style="left:206.50px;top:554.90px;width:11.40px;height:11.40px;background:#ffe88b;border-radius:3.5px;"></div>
<span class="t" style="left:221.87px;top:550.50px;font-size:13px;color:#1c2b34;transform:scaleX(1.0157);transform-origin:0 0;">a</span>
<span class="t" style="left:232.60px;top:550.50px;font-size:13px;color:#5f6671;transform:scaleX(1.0282);transform-origin:0 0;">(34.39%)</span>
<div class="b" style="left:298.80px;top:554.90px;width:11.40px;height:11.40px;background:#92c6fa;border-radius:3.5px;"></div>
<span class="t" style="left:313.67px;top:550.50px;font-size:13px;color:#1c2b34;letter-spacing:0.877px;transform:scaleX(1.1000);transform-origin:0 0;">b</span>
<span class="t" style="left:325.60px;top:550.50px;font-size:13px;color:#5f6671;transform:scaleX(1.0204);transform-origin:0 0;">(30.31%)</span>
<div class="b" style="left:391.50px;top:554.90px;width:11.40px;height:11.40px;background:#2f8be2;border-radius:3.5px;"></div>
<span class="t" style="left:406.43px;top:550.50px;font-size:13px;color:#1c2b34;letter-spacing:0.072px;transform:scaleX(1.1000);transform-origin:0 0;">c</span>
<span class="t" style="left:416.61px;top:550.50px;font-size:13px;color:#5f6671;transform:scaleX(1.0150);transform-origin:0 0;">(35.3%)</span>
<svg class="b" style="left:520px;top:496px" width="440" height="117" viewBox="520 496 440 117"><clipPath id="c496"><rect x="561" y="496" width="379.2" height="83.79999999999995"/></clipPath><text x="557.8" y="583.60" text-anchor="end" class="ax">0</text><rect x="561" y="549.75" width="379" height="1" fill="#ececf0"/><text x="557.8" y="554.05" text-anchor="end" class="ax">10</text><rect x="561" y="520.20" width="379" height="1" fill="#ececf0"/><text x="557.8" y="524.50" text-anchor="end" class="ax">20</text><g clip-path="url(#c496)"><rect x="559.54" y="570.93" width="5.263" height="8.87" fill="#c1dcf6"/><rect x="560.20" y="570.93" width="3.95" height="8.87" fill="#2f8be2"/><rect x="559.54" y="556.16" width="5.263" height="14.78" fill="#deeefe"/><rect x="560.20" y="556.16" width="3.95" height="14.78" fill="#92c6fa"/><rect x="559.54" y="532.52" width="5.263" height="23.64" fill="#fff8dc"/><rect x="560.20" y="532.52" width="3.95" height="23.64" fill="#ffe88b"/><rect x="564.80" y="567.98" width="5.263" height="11.82" fill="#c1dcf6"/><rect x="565.46" y="567.98" width="3.95" height="11.82" fill="#2f8be2"/><rect x="564.80" y="565.02" width="5.263" height="2.96" fill="#deeefe"/><rect x="565.46" y="565.02" width="3.95" height="2.96" fill="#92c6fa"/><rect x="564.80" y="547.29" width="5.263" height="17.73" fill="#fff8dc"/><rect x="565.46" y="547.29" width="3.95" height="17.73" fill="#ffe88b"/><rect x="570.07" y="570.93" width="5.263" height="8.87" fill="#c1dcf6"/><rect x="570.73" y="570.93" width="3.95" height="8.87" fill="#2f8be2"/><rect x="570.07" y="559.12" width="5.263" height="11.82" fill="#deeefe"/><rect x="570.73" y="559.12" width="3.95" height="11.82" fill="#92c6fa"/><rect x="570.07" y="541.38" width="5.263" height="17.73" fill="#fff8dc"/><rect x="570.73" y="541.38" width="3.95" height="17.73" fill="#ffe88b"/><rect x="575.33" y="559.12" width="5.263" height="20.69" fill="#c1dcf6"/><rect x="575.99" y="559.12" width="3.95" height="20.69" fill="#2f8be2"/><rect x="575.33" y="544.34" width="5.263" height="14.78" fill="#deeefe"/><rect x="575.99" y="544.34" width="3.95" height="14.78" fill="#92c6fa"/><rect x="575.33" y="535.47" width="5.263" height="8.87" fill="#fff8dc"/><rect x="575.99" y="535.47" width="3.95" height="8.87" fill="#ffe88b"/><rect x="580.59" y="573.89" width="5.263" height="5.91" fill="#c1dcf6"/><rect x="581.25" y="573.89" width="3.95" height="5.91" fill="#2f8be2"/><rect x="580.59" y="562.07" width="5.263" height="11.82" fill="#deeefe"/><rect x="581.25" y="562.07" width="3.95" height="11.82" fill="#92c6fa"/><rect x="580.59" y="556.16" width="5.263" height="5.91" fill="#fff8dc"/><rect x="581.25" y="556.16" width="3.95" height="5.91" fill="#ffe88b"/><rect x="585.86" y="556.16" width="5.263" height="23.64" fill="#c1dcf6"/><rect x="586.52" y="556.16" width="3.95" height="23.64" fill="#2f8be2"/><rect x="585.86" y="550.25" width="5.263" height="5.91" fill="#deeefe"/><rect x="586.52" y="550.25" width="3.95" height="5.91" fill="#92c6fa"/><rect x="585.86" y="526.61" width="5.263" height="23.64" fill="#fff8dc"/><rect x="586.52" y="526.61" width="3.95" height="23.64" fill="#ffe88b"/><rect x="591.12" y="553.20" width="5.263" height="26.59" fill="#c1dcf6"/><rect x="591.78" y="553.20" width="3.95" height="26.59" fill="#2f8be2"/><rect x="591.12" y="547.29" width="5.263" height="5.91" fill="#deeefe"/><rect x="591.78" y="547.29" width="3.95" height="5.91" fill="#92c6fa"/><rect x="591.12" y="541.38" width="5.263" height="5.91" fill="#fff8dc"/><rect x="591.78" y="541.38" width="3.95" height="5.91" fill="#ffe88b"/><rect x="596.38" y="562.07" width="5.263" height="17.73" fill="#c1dcf6"/><rect x="597.04" y="562.07" width="3.95" height="17.73" fill="#2f8be2"/><rect x="596.38" y="553.20" width="5.263" height="8.87" fill="#deeefe"/><rect x="597.04" y="553.20" width="3.95" height="8.87" fill="#92c6fa"/><rect x="596.38" y="541.38" width="5.263" height="11.82" fill="#fff8dc"/><rect x="597.04" y="541.38" width="3.95" height="11.82" fill="#ffe88b"/><rect x="601.64" y="567.98" width="5.263" height="11.82" fill="#c1dcf6"/><rect x="602.30" y="567.98" width="3.95" height="11.82" fill="#2f8be2"/><rect x="601.64" y="544.34" width="5.263" height="23.64" fill="#deeefe"/><rect x="602.30" y="544.34" width="3.95" height="23.64" fill="#92c6fa"/><rect x="601.64" y="529.56" width="5.263" height="14.78" fill="#fff8dc"/><rect x="602.30" y="529.56" width="3.95" height="14.78" fill="#ffe88b"/><rect x="606.91" y="565.02" width="5.263" height="14.78" fill="#c1dcf6"/><rect x="607.57" y="565.02" width="3.95" height="14.78" fill="#2f8be2"/><rect x="606.91" y="538.43" width="5.263" height="26.59" fill="#deeefe"/><rect x="607.57" y="538.43" width="3.95" height="26.59" fill="#92c6fa"/><rect x="606.91" y="520.70" width="5.263" height="17.73" fill="#fff8dc"/><rect x="607.57" y="520.70" width="3.95" height="17.73" fill="#ffe88b"/><rect x="612.17" y="570.93" width="5.263" height="8.87" fill="#c1dcf6"/><rect x="612.83" y="570.93" width="3.95" height="8.87" fill="#2f8be2"/><rect x="612.17" y="550.25" width="5.263" height="20.69" fill="#deeefe"/><rect x="612.83" y="550.25" width="3.95" height="20.69" fill="#92c6fa"/><rect x="612.17" y="538.43" width="5.263" height="11.82" fill="#fff8dc"/><rect x="612.83" y="538.43" width="3.95" height="11.82" fill="#ffe88b"/><rect x="617.43" y="576.84" width="5.263" height="2.96" fill="#c1dcf6"/><rect x="618.09" y="576.84" width="3.95" height="2.96" fill="#2f8be2"/><rect x="617.43" y="570.93" width="5.263" height="5.91" fill="#deeefe"/><rect x="618.09" y="570.93" width="3.95" height="5.91" fill="#92c6fa"/><rect x="617.43" y="565.02" width="5.263" height="5.91" fill="#fff8dc"/><rect x="618.09" y="565.02" width="3.95" height="5.91" fill="#ffe88b"/><rect x="622.70" y="562.07" width="5.263" height="17.73" fill="#c1dcf6"/><rect x="623.36" y="562.07" width="3.95" height="17.73" fill="#2f8be2"/><rect x="622.70" y="544.34" width="5.263" height="17.73" fill="#deeefe"/><rect x="623.36" y="544.34" width="3.95" height="17.73" fill="#92c6fa"/><rect x="622.70" y="532.52" width="5.263" height="11.82" fill="#fff8dc"/><rect x="623.36" y="532.52" width="3.95" height="11.82" fill="#ffe88b"/><rect x="627.96" y="567.98" width="5.263" height="11.82" fill="#c1dcf6"/><rect x="628.62" y="567.98" width="3.95" height="11.82" fill="#2f8be2"/><rect x="627.96" y="556.16" width="5.263" height="11.82" fill="#deeefe"/><rect x="628.62" y="556.16" width="3.95" height="11.82" fill="#92c6fa"/><rect x="627.96" y="550.25" width="5.263" height="5.91" fill="#fff8dc"/><rect x="628.62" y="550.25" width="3.95" height="5.91" fill="#ffe88b"/><rect x="633.22" y="567.98" width="5.263" height="11.82" fill="#c1dcf6"/><rect x="633.88" y="567.98" width="3.95" height="11.82" fill="#2f8be2"/><rect x="633.22" y="547.29" width="5.263" height="20.69" fill="#deeefe"/><rect x="633.88" y="547.29" width="3.95" height="20.69" fill="#92c6fa"/><rect x="633.22" y="532.52" width="5.263" height="14.78" fill="#fff8dc"/><rect x="633.88" y="532.52" width="3.95" height="14.78" fill="#ffe88b"/><rect x="638.49" y="565.02" width="5.263" height="14.78" fill="#c1dcf6"/><rect x="639.14" y="565.02" width="3.95" height="14.78" fill="#2f8be2"/><rect x="638.49" y="556.16" width="5.263" height="8.87" fill="#deeefe"/><rect x="639.14" y="556.16" width="3.95" height="8.87" fill="#92c6fa"/><rect x="638.49" y="541.38" width="5.263" height="14.78" fill="#fff8dc"/><rect x="639.14" y="541.38" width="3.95" height="14.78" fill="#ffe88b"/><rect x="643.75" y="565.02" width="5.263" height="14.78" fill="#c1dcf6"/><rect x="644.41" y="565.02" width="3.95" height="14.78" fill="#2f8be2"/><rect x="643.75" y="544.34" width="5.263" height="20.69" fill="#deeefe"/><rect x="644.41" y="544.34" width="3.95" height="20.69" fill="#92c6fa"/><rect x="643.75" y="538.43" width="5.263" height="5.91" fill="#fff8dc"/><rect x="644.41" y="538.43" width="3.95" height="5.91" fill="#ffe88b"/><rect x="649.01" y="565.02" width="5.263" height="14.78" fill="#c1dcf6"/><rect x="649.67" y="565.02" width="3.95" height="14.78" fill="#2f8be2"/><rect x="649.01" y="559.12" width="5.263" height="5.91" fill="#deeefe"/><rect x="649.67" y="559.12" width="3.95" height="5.91" fill="#92c6fa"/><rect x="649.01" y="556.16" width="5.263" height="2.96" fill="#fff8dc"/><rect x="649.67" y="556.16" width="3.95" height="2.96" fill="#ffe88b"/><rect x="654.27" y="570.93" width="5.263" height="8.87" fill="#c1dcf6"/><rect x="654.93" y="570.93" width="3.95" height="8.87" fill="#2f8be2"/><rect x="654.27" y="556.16" width="5.263" height="14.78" fill="#deeefe"/><rect x="654.93" y="556.16" width="3.95" height="14.78" fill="#92c6fa"/><rect x="654.27" y="538.43" width="5.263" height="17.73" fill="#fff8dc"/><rect x="654.93" y="538.43" width="3.95" height="17.73" fill="#ffe88b"/><rect x="659.54" y="576.84" width="5.263" height="2.96" fill="#deeefe"/><rect x="660.20" y="576.84" width="3.95" height="2.96" fill="#92c6fa"/><rect x="659.54" y="553.20" width="5.263" height="23.64" fill="#fff8dc"/><rect x="660.20" y="553.20" width="3.95" height="23.64" fill="#ffe88b"/><rect x="664.80" y="556.16" width="5.263" height="23.64" fill="#c1dcf6"/><rect x="665.46" y="556.16" width="3.95" height="23.64" fill="#2f8be2"/><rect x="664.80" y="544.34" width="5.263" height="11.82" fill="#deeefe"/><rect x="665.46" y="544.34" width="3.95" height="11.82" fill="#92c6fa"/><rect x="664.80" y="532.52" width="5.263" height="11.82" fill="#fff8dc"/><rect x="665.46" y="532.52" width="3.95" height="11.82" fill="#ffe88b"/><rect x="670.06" y="556.16" width="5.263" height="23.64" fill="#c1dcf6"/><rect x="670.72" y="556.16" width="3.95" height="23.64" fill="#2f8be2"/><rect x="670.06" y="550.25" width="5.263" height="5.91" fill="#deeefe"/><rect x="670.72" y="550.25" width="3.95" height="5.91" fill="#92c6fa"/><rect x="670.06" y="538.43" width="5.263" height="11.82" fill="#fff8dc"/><rect x="670.72" y="538.43" width="3.95" height="11.82" fill="#ffe88b"/><rect x="675.33" y="576.84" width="5.263" height="2.96" fill="#c1dcf6"/><rect x="675.99" y="576.84" width="3.95" height="2.96" fill="#2f8be2"/><rect x="675.33" y="565.02" width="5.263" height="11.82" fill="#deeefe"/><rect x="675.99" y="565.02" width="3.95" height="11.82" fill="#92c6fa"/><rect x="675.33" y="556.16" width="5.263" height="8.87" fill="#fff8dc"/><rect x="675.99" y="556.16" width="3.95" height="8.87" fill="#ffe88b"/><rect x="680.59" y="565.02" width="5.263" height="14.78" fill="#c1dcf6"/><rect x="681.25" y="565.02" width="3.95" height="14.78" fill="#2f8be2"/><rect x="680.59" y="556.16" width="5.263" height="8.87" fill="#deeefe"/><rect x="681.25" y="556.16" width="3.95" height="8.87" fill="#92c6fa"/><rect x="680.59" y="544.34" width="5.263" height="11.82" fill="#fff8dc"/><rect x="681.25" y="544.34" width="3.95" height="11.82" fill="#ffe88b"/><rect x="685.85" y="565.02" width="5.263" height="14.78" fill="#c1dcf6"/><rect x="686.51" y="565.02" width="3.95" height="14.78" fill="#2f8be2"/><rect x="685.85" y="556.16" width="5.263" height="8.87" fill="#deeefe"/><rect x="686.51" y="556.16" width="3.95" height="8.87" fill="#92c6fa"/><rect x="685.85" y="529.56" width="5.263" height="26.59" fill="#fff8dc"/><rect x="686.51" y="529.56" width="3.95" height="26.59" fill="#ffe88b"/><rect x="691.12" y="567.98" width="5.263" height="11.82" fill="#c1dcf6"/><rect x="691.78" y="567.98" width="3.95" height="11.82" fill="#2f8be2"/><rect x="691.12" y="565.02" width="5.263" height="2.96" fill="#deeefe"/><rect x="691.78" y="565.02" width="3.95" height="2.96" fill="#92c6fa"/><rect x="691.12" y="559.12" width="5.263" height="5.91" fill="#fff8dc"/><rect x="691.78" y="559.12" width="3.95" height="5.91" fill="#ffe88b"/><rect x="696.38" y="567.98" width="5.263" height="11.82" fill="#c1dcf6"/><rect x="697.04" y="567.98" width="3.95" height="11.82" fill="#2f8be2"/><rect x="696.38" y="544.34" width="5.263" height="23.64" fill="#deeefe"/><rect x="697.04" y="544.34" width="3.95" height="23.64" fill="#92c6fa"/><rect x="696.38" y="535.47" width="5.263" height="8.87" fill="#fff8dc"/><rect x="697.04" y="535.47" width="3.95" height="8.87" fill="#ffe88b"/><rect x="701.64" y="570.93" width="5.263" height="8.87" fill="#c1dcf6"/><rect x="702.30" y="570.93" width="3.95" height="8.87" fill="#2f8be2"/><rect x="701.64" y="556.16" width="5.263" height="14.78" fill="#deeefe"/><rect x="702.30" y="556.16" width="3.95" height="14.78" fill="#92c6fa"/><rect x="701.64" y="538.43" width="5.263" height="17.73" fill="#fff8dc"/><rect x="702.30" y="538.43" width="3.95" height="17.73" fill="#ffe88b"/><rect x="706.90" y="576.84" width="5.263" height="2.96" fill="#c1dcf6"/><rect x="707.56" y="576.84" width="3.95" height="2.96" fill="#2f8be2"/><rect x="706.90" y="559.12" width="5.263" height="17.73" fill="#deeefe"/><rect x="707.56" y="559.12" width="3.95" height="17.73" fill="#92c6fa"/><rect x="706.90" y="535.47" width="5.263" height="23.64" fill="#fff8dc"/><rect x="707.56" y="535.47" width="3.95" height="23.64" fill="#ffe88b"/><rect x="712.17" y="562.07" width="5.263" height="17.73" fill="#c1dcf6"/><rect x="712.83" y="562.07" width="3.95" height="17.73" fill="#2f8be2"/><rect x="712.17" y="556.16" width="5.263" height="5.91" fill="#deeefe"/><rect x="712.83" y="556.16" width="3.95" height="5.91" fill="#92c6fa"/><rect x="712.17" y="541.38" width="5.263" height="14.78" fill="#fff8dc"/><rect x="712.83" y="541.38" width="3.95" height="14.78" fill="#ffe88b"/><rect x="717.43" y="559.12" width="5.263" height="20.69" fill="#c1dcf6"/><rect x="718.09" y="559.12" width="3.95" height="20.69" fill="#2f8be2"/><rect x="717.43" y="553.20" width="5.263" height="5.91" fill="#deeefe"/><rect x="718.09" y="553.20" width="3.95" height="5.91" fill="#92c6fa"/><rect x="717.43" y="538.43" width="5.263" height="14.78" fill="#fff8dc"/><rect x="718.09" y="538.43" width="3.95" height="14.78" fill="#ffe88b"/><rect x="722.69" y="573.89" width="5.263" height="5.91" fill="#c1dcf6"/><rect x="723.35" y="573.89" width="3.95" height="5.91" fill="#2f8be2"/><rect x="722.69" y="565.02" width="5.263" height="8.87" fill="#deeefe"/><rect x="723.35" y="565.02" width="3.95" height="8.87" fill="#92c6fa"/><rect x="722.69" y="559.12" width="5.263" height="5.91" fill="#fff8dc"/><rect x="723.35" y="559.12" width="3.95" height="5.91" fill="#ffe88b"/><rect x="727.96" y="567.98" width="5.263" height="11.82" fill="#c1dcf6"/><rect x="728.62" y="567.98" width="3.95" height="11.82" fill="#2f8be2"/><rect x="727.96" y="550.25" width="5.263" height="17.73" fill="#deeefe"/><rect x="728.62" y="550.25" width="3.95" height="17.73" fill="#92c6fa"/><rect x="727.96" y="535.47" width="5.263" height="14.78" fill="#fff8dc"/><rect x="728.62" y="535.47" width="3.95" height="14.78" fill="#ffe88b"/><rect x="733.22" y="562.07" width="5.263" height="17.73" fill="#c1dcf6"/><rect x="733.88" y="562.07" width="3.95" height="17.73" fill="#2f8be2"/><rect x="733.22" y="547.29" width="5.263" height="14.78" fill="#deeefe"/><rect x="733.88" y="547.29" width="3.95" height="14.78" fill="#92c6fa"/><rect x="733.22" y="532.52" width="5.263" height="14.78" fill="#fff8dc"/><rect x="733.88" y="532.52" width="3.95" height="14.78" fill="#ffe88b"/><rect x="738.48" y="567.98" width="5.263" height="11.82" fill="#c1dcf6"/><rect x="739.14" y="567.98" width="3.95" height="11.82" fill="#2f8be2"/><rect x="738.48" y="556.16" width="5.263" height="11.82" fill="#deeefe"/><rect x="739.14" y="556.16" width="3.95" height="11.82" fill="#92c6fa"/><rect x="743.75" y="570.93" width="5.263" height="8.87" fill="#c1dcf6"/><rect x="744.40" y="570.93" width="3.95" height="8.87" fill="#2f8be2"/><rect x="743.75" y="550.25" width="5.263" height="20.69" fill="#fff8dc"/><rect x="744.40" y="550.25" width="3.95" height="20.69" fill="#ffe88b"/><rect x="749.01" y="570.93" width="5.263" height="8.87" fill="#c1dcf6"/><rect x="749.67" y="570.93" width="3.95" height="8.87" fill="#2f8be2"/><rect x="749.01" y="559.12" width="5.263" height="11.82" fill="#deeefe"/><rect x="749.67" y="559.12" width="3.95" height="11.82" fill="#92c6fa"/><rect x="749.01" y="547.29" width="5.263" height="11.82" fill="#fff8dc"/><rect x="749.67" y="547.29" width="3.95" height="11.82" fill="#ffe88b"/><rect x="754.27" y="570.93" width="5.263" height="8.87" fill="#c1dcf6"/><rect x="754.93" y="570.93" width="3.95" height="8.87" fill="#2f8be2"/><rect x="754.27" y="565.02" width="5.263" height="5.91" fill="#deeefe"/><rect x="754.93" y="565.02" width="3.95" height="5.91" fill="#92c6fa"/><rect x="754.27" y="556.16" width="5.263" height="8.87" fill="#fff8dc"/><rect x="754.93" y="556.16" width="3.95" height="8.87" fill="#ffe88b"/><rect x="759.53" y="570.93" width="5.263" height="8.87" fill="#c1dcf6"/><rect x="760.19" y="570.93" width="3.95" height="8.87" fill="#2f8be2"/><rect x="759.53" y="559.12" width="5.263" height="11.82" fill="#deeefe"/><rect x="760.19" y="559.12" width="3.95" height="11.82" fill="#92c6fa"/><rect x="759.53" y="535.47" width="5.263" height="23.64" fill="#fff8dc"/><rect x="760.19" y="535.47" width="3.95" height="23.64" fill="#ffe88b"/><rect x="764.80" y="553.20" width="5.263" height="26.59" fill="#c1dcf6"/><rect x="765.46" y="553.20" width="3.95" height="26.59" fill="#2f8be2"/><rect x="764.80" y="547.29" width="5.263" height="5.91" fill="#deeefe"/><rect x="765.46" y="547.29" width="3.95" height="5.91" fill="#92c6fa"/><rect x="764.80" y="541.38" width="5.263" height="5.91" fill="#fff8dc"/><rect x="765.46" y="541.38" width="3.95" height="5.91" fill="#ffe88b"/><rect x="770.06" y="562.07" width="5.263" height="17.73" fill="#c1dcf6"/><rect x="770.72" y="562.07" width="3.95" height="17.73" fill="#2f8be2"/><rect x="770.06" y="559.12" width="5.263" height="2.96" fill="#deeefe"/><rect x="770.72" y="559.12" width="3.95" height="2.96" fill="#92c6fa"/><rect x="770.06" y="553.20" width="5.263" height="5.91" fill="#fff8dc"/><rect x="770.72" y="553.20" width="3.95" height="5.91" fill="#ffe88b"/><rect x="775.32" y="567.98" width="5.263" height="11.82" fill="#c1dcf6"/><rect x="775.98" y="567.98" width="3.95" height="11.82" fill="#2f8be2"/><rect x="775.32" y="550.25" width="5.263" height="17.73" fill="#deeefe"/><rect x="775.98" y="550.25" width="3.95" height="17.73" fill="#92c6fa"/><rect x="775.32" y="538.43" width="5.263" height="11.82" fill="#fff8dc"/><rect x="775.98" y="538.43" width="3.95" height="11.82" fill="#ffe88b"/><rect x="780.59" y="565.02" width="5.263" height="14.78" fill="#c1dcf6"/><rect x="781.25" y="565.02" width="3.95" height="14.78" fill="#2f8be2"/><rect x="780.59" y="547.29" width="5.263" height="17.73" fill="#deeefe"/><rect x="781.25" y="547.29" width="3.95" height="17.73" fill="#92c6fa"/><rect x="780.59" y="535.47" width="5.263" height="11.82" fill="#fff8dc"/><rect x="781.25" y="535.47" width="3.95" height="11.82" fill="#ffe88b"/><rect x="785.85" y="562.07" width="5.263" height="17.73" fill="#c1dcf6"/><rect x="786.51" y="562.07" width="3.95" height="17.73" fill="#2f8be2"/><rect x="785.85" y="550.25" width="5.263" height="11.82" fill="#deeefe"/><rect x="786.51" y="550.25" width="3.95" height="11.82" fill="#92c6fa"/><rect x="785.85" y="544.34" width="5.263" height="5.91" fill="#fff8dc"/><rect x="786.51" y="544.34" width="3.95" height="5.91" fill="#ffe88b"/><rect x="791.11" y="562.07" width="5.263" height="17.73" fill="#c1dcf6"/><rect x="791.77" y="562.07" width="3.95" height="17.73" fill="#2f8be2"/><rect x="791.11" y="550.25" width="5.263" height="11.82" fill="#deeefe"/><rect x="791.77" y="550.25" width="3.95" height="11.82" fill="#92c6fa"/><rect x="791.11" y="541.38" width="5.263" height="8.87" fill="#fff8dc"/><rect x="791.77" y="541.38" width="3.95" height="8.87" fill="#ffe88b"/><rect x="796.38" y="562.07" width="5.263" height="17.73" fill="#c1dcf6"/><rect x="797.04" y="562.07" width="3.95" height="17.73" fill="#2f8be2"/><rect x="796.38" y="544.34" width="5.263" height="17.73" fill="#deeefe"/><rect x="797.04" y="544.34" width="3.95" height="17.73" fill="#92c6fa"/><rect x="796.38" y="535.47" width="5.263" height="8.87" fill="#fff8dc"/><rect x="797.04" y="535.47" width="3.95" height="8.87" fill="#ffe88b"/><rect x="801.64" y="573.89" width="5.263" height="5.91" fill="#c1dcf6"/><rect x="802.30" y="573.89" width="3.95" height="5.91" fill="#2f8be2"/><rect x="801.64" y="562.07" width="5.263" height="11.82" fill="#deeefe"/><rect x="802.30" y="562.07" width="3.95" height="11.82" fill="#92c6fa"/><rect x="801.64" y="556.16" width="5.263" height="5.91" fill="#fff8dc"/><rect x="802.30" y="556.16" width="3.95" height="5.91" fill="#ffe88b"/><rect x="806.90" y="559.12" width="5.263" height="20.69" fill="#c1dcf6"/><rect x="807.56" y="559.12" width="3.95" height="20.69" fill="#2f8be2"/><rect x="806.90" y="553.20" width="5.263" height="5.91" fill="#deeefe"/><rect x="807.56" y="553.20" width="3.95" height="5.91" fill="#92c6fa"/><rect x="806.90" y="547.29" width="5.263" height="5.91" fill="#fff8dc"/><rect x="807.56" y="547.29" width="3.95" height="5.91" fill="#ffe88b"/><rect x="812.16" y="565.02" width="5.263" height="14.78" fill="#c1dcf6"/><rect x="812.82" y="565.02" width="3.95" height="14.78" fill="#2f8be2"/><rect x="812.16" y="553.20" width="5.263" height="11.82" fill="#deeefe"/><rect x="812.82" y="553.20" width="3.95" height="11.82" fill="#92c6fa"/><rect x="812.16" y="538.43" width="5.263" height="14.78" fill="#fff8dc"/><rect x="812.82" y="538.43" width="3.95" height="14.78" fill="#ffe88b"/><rect x="817.43" y="567.98" width="5.263" height="11.82" fill="#c1dcf6"/><rect x="818.09" y="567.98" width="3.95" height="11.82" fill="#2f8be2"/><rect x="817.43" y="559.12" width="5.263" height="8.87" fill="#deeefe"/><rect x="818.09" y="559.12" width="3.95" height="8.87" fill="#92c6fa"/><rect x="817.43" y="553.20" width="5.263" height="5.91" fill="#fff8dc"/><rect x="818.09" y="553.20" width="3.95" height="5.91" fill="#ffe88b"/><rect x="822.69" y="567.98" width="5.263" height="11.82" fill="#c1dcf6"/><rect x="823.35" y="567.98" width="3.95" height="11.82" fill="#2f8be2"/><rect x="822.69" y="562.07" width="5.263" height="5.91" fill="#deeefe"/><rect x="823.35" y="562.07" width="3.95" height="5.91" fill="#92c6fa"/><rect x="822.69" y="532.52" width="5.263" height="29.55" fill="#fff8dc"/><rect x="823.35" y="532.52" width="3.95" height="29.55" fill="#ffe88b"/><rect x="827.95" y="547.29" width="5.263" height="32.51" fill="#c1dcf6"/><rect x="828.61" y="547.29" width="3.95" height="32.51" fill="#2f8be2"/><rect x="827.95" y="538.43" width="5.263" height="8.87" fill="#deeefe"/><rect x="828.61" y="538.43" width="3.95" height="8.87" fill="#92c6fa"/><rect x="827.95" y="529.56" width="5.263" height="8.87" fill="#fff8dc"/><rect x="828.61" y="529.56" width="3.95" height="8.87" fill="#ffe88b"/><rect x="833.22" y="570.93" width="5.263" height="8.87" fill="#c1dcf6"/><rect x="833.88" y="570.93" width="3.95" height="8.87" fill="#2f8be2"/><rect x="833.22" y="562.07" width="5.263" height="8.87" fill="#deeefe"/><rect x="833.88" y="562.07" width="3.95" height="8.87" fill="#92c6fa"/><rect x="833.22" y="559.12" width="5.263" height="2.96" fill="#fff8dc"/><rect x="833.88" y="559.12" width="3.95" height="2.96" fill="#ffe88b"/><rect x="838.48" y="565.02" width="5.263" height="14.78" fill="#c1dcf6"/><rect x="839.14" y="565.02" width="3.95" height="14.78" fill="#2f8be2"/><rect x="838.48" y="559.12" width="5.263" height="5.91" fill="#deeefe"/><rect x="839.14" y="559.12" width="3.95" height="5.91" fill="#92c6fa"/><rect x="838.48" y="541.38" width="5.263" height="17.73" fill="#fff8dc"/><rect x="839.14" y="541.38" width="3.95" height="17.73" fill="#ffe88b"/><rect x="843.74" y="570.93" width="5.263" height="8.87" fill="#c1dcf6"/><rect x="844.40" y="570.93" width="3.95" height="8.87" fill="#2f8be2"/><rect x="843.74" y="559.12" width="5.263" height="11.82" fill="#deeefe"/><rect x="844.40" y="559.12" width="3.95" height="11.82" fill="#92c6fa"/><rect x="843.74" y="538.43" width="5.263" height="20.69" fill="#fff8dc"/><rect x="844.40" y="538.43" width="3.95" height="20.69" fill="#ffe88b"/><rect x="849.00" y="573.89" width="5.263" height="5.91" fill="#c1dcf6"/><rect x="849.66" y="573.89" width="3.95" height="5.91" fill="#2f8be2"/><rect x="849.00" y="562.07" width="5.263" height="11.82" fill="#deeefe"/><rect x="849.66" y="562.07" width="3.95" height="11.82" fill="#92c6fa"/><rect x="849.00" y="559.12" width="5.263" height="2.96" fill="#fff8dc"/><rect x="849.66" y="559.12" width="3.95" height="2.96" fill="#ffe88b"/><rect x="854.27" y="565.02" width="5.263" height="14.78" fill="#c1dcf6"/><rect x="854.93" y="565.02" width="3.95" height="14.78" fill="#2f8be2"/><rect x="854.27" y="553.20" width="5.263" height="11.82" fill="#deeefe"/><rect x="854.93" y="553.20" width="3.95" height="11.82" fill="#92c6fa"/><rect x="854.27" y="538.43" width="5.263" height="14.78" fill="#fff8dc"/><rect x="854.93" y="538.43" width="3.95" height="14.78" fill="#ffe88b"/><rect x="859.53" y="562.07" width="5.263" height="17.73" fill="#c1dcf6"/><rect x="860.19" y="562.07" width="3.95" height="17.73" fill="#2f8be2"/><rect x="859.53" y="556.16" width="5.263" height="5.91" fill="#deeefe"/><rect x="860.19" y="556.16" width="3.95" height="5.91" fill="#92c6fa"/><rect x="859.53" y="541.38" width="5.263" height="14.78" fill="#fff8dc"/><rect x="860.19" y="541.38" width="3.95" height="14.78" fill="#ffe88b"/><rect x="864.79" y="567.98" width="5.263" height="11.82" fill="#c1dcf6"/><rect x="865.45" y="567.98" width="3.95" height="11.82" fill="#2f8be2"/><rect x="864.79" y="553.20" width="5.263" height="14.78" fill="#deeefe"/><rect x="865.45" y="553.20" width="3.95" height="14.78" fill="#92c6fa"/><rect x="864.79" y="547.29" width="5.263" height="5.91" fill="#fff8dc"/><rect x="865.45" y="547.29" width="3.95" height="5.91" fill="#ffe88b"/><rect x="870.06" y="556.16" width="5.263" height="23.64" fill="#c1dcf6"/><rect x="870.72" y="556.16" width="3.95" height="23.64" fill="#2f8be2"/><rect x="870.06" y="544.34" width="5.263" height="11.82" fill="#deeefe"/><rect x="870.72" y="544.34" width="3.95" height="11.82" fill="#92c6fa"/><rect x="870.06" y="538.43" width="5.263" height="5.91" fill="#fff8dc"/><rect x="870.72" y="538.43" width="3.95" height="5.91" fill="#ffe88b"/><rect x="875.32" y="565.02" width="5.263" height="14.78" fill="#c1dcf6"/><rect x="875.98" y="565.02" width="3.95" height="14.78" fill="#2f8be2"/><rect x="875.32" y="553.20" width="5.263" height="11.82" fill="#deeefe"/><rect x="875.98" y="553.20" width="3.95" height="11.82" fill="#92c6fa"/><rect x="875.32" y="544.34" width="5.263" height="8.87" fill="#fff8dc"/><rect x="875.98" y="544.34" width="3.95" height="8.87" fill="#ffe88b"/><rect x="880.58" y="570.93" width="5.263" height="8.87" fill="#c1dcf6"/><rect x="881.24" y="570.93" width="3.95" height="8.87" fill="#2f8be2"/><rect x="880.58" y="565.02" width="5.263" height="5.91" fill="#deeefe"/><rect x="881.24" y="565.02" width="3.95" height="5.91" fill="#92c6fa"/><rect x="880.58" y="556.16" width="5.263" height="8.87" fill="#fff8dc"/><rect x="881.24" y="556.16" width="3.95" height="8.87" fill="#ffe88b"/><rect x="885.85" y="570.93" width="5.263" height="8.87" fill="#c1dcf6"/><rect x="886.51" y="570.93" width="3.95" height="8.87" fill="#2f8be2"/><rect x="885.85" y="562.07" width="5.263" height="8.87" fill="#deeefe"/><rect x="886.51" y="562.07" width="3.95" height="8.87" fill="#92c6fa"/><rect x="885.85" y="538.43" width="5.263" height="23.64" fill="#fff8dc"/><rect x="886.51" y="538.43" width="3.95" height="23.64" fill="#ffe88b"/><rect x="891.11" y="562.07" width="5.263" height="17.73" fill="#c1dcf6"/><rect x="891.77" y="562.07" width="3.95" height="17.73" fill="#2f8be2"/><rect x="891.11" y="553.20" width="5.263" height="8.87" fill="#deeefe"/><rect x="891.77" y="553.20" width="3.95" height="8.87" fill="#92c6fa"/><rect x="891.11" y="544.34" width="5.263" height="8.87" fill="#fff8dc"/><rect x="891.77" y="544.34" width="3.95" height="8.87" fill="#ffe88b"/><rect x="896.37" y="573.89" width="5.263" height="5.91" fill="#c1dcf6"/><rect x="897.03" y="573.89" width="3.95" height="5.91" fill="#2f8be2"/><rect x="896.37" y="565.02" width="5.263" height="8.87" fill="#deeefe"/><rect x="897.03" y="565.02" width="3.95" height="8.87" fill="#92c6fa"/><rect x="896.37" y="556.16" width="5.263" height="8.87" fill="#fff8dc"/><rect x="897.03" y="556.16" width="3.95" height="8.87" fill="#ffe88b"/><rect x="901.64" y="562.07" width="5.263" height="17.73" fill="#c1dcf6"/><rect x="902.30" y="562.07" width="3.95" height="17.73" fill="#2f8be2"/><rect x="901.64" y="550.25" width="5.263" height="11.82" fill="#deeefe"/><rect x="902.30" y="550.25" width="3.95" height="11.82" fill="#92c6fa"/><rect x="901.64" y="541.38" width="5.263" height="8.87" fill="#fff8dc"/><rect x="902.30" y="541.38" width="3.95" height="8.87" fill="#ffe88b"/><rect x="906.90" y="573.89" width="5.263" height="5.91" fill="#c1dcf6"/><rect x="907.56" y="573.89" width="3.95" height="5.91" fill="#2f8be2"/><rect x="906.90" y="562.07" width="5.263" height="11.82" fill="#deeefe"/><rect x="907.56" y="562.07" width="3.95" height="11.82" fill="#92c6fa"/><rect x="906.90" y="556.16" width="5.263" height="5.91" fill="#fff8dc"/><rect x="907.56" y="556.16" width="3.95" height="5.91" fill="#ffe88b"/><rect x="912.16" y="576.84" width="5.263" height="2.96" fill="#c1dcf6"/><rect x="912.82" y="576.84" width="3.95" height="2.96" fill="#2f8be2"/><rect x="912.16" y="570.93" width="5.263" height="5.91" fill="#fff8dc"/><rect x="912.82" y="570.93" width="3.95" height="5.91" fill="#ffe88b"/><rect x="917.42" y="565.02" width="5.263" height="14.78" fill="#c1dcf6"/><rect x="918.08" y="565.02" width="3.95" height="14.78" fill="#2f8be2"/><rect x="917.42" y="553.20" width="5.263" height="11.82" fill="#deeefe"/><rect x="918.08" y="553.20" width="3.95" height="11.82" fill="#92c6fa"/><rect x="917.42" y="541.38" width="5.263" height="11.82" fill="#fff8dc"/><rect x="918.08" y="541.38" width="3.95" height="11.82" fill="#ffe88b"/><rect x="922.69" y="570.93" width="5.263" height="8.87" fill="#c1dcf6"/><rect x="923.35" y="570.93" width="3.95" height="8.87" fill="#2f8be2"/><rect x="922.69" y="556.16" width="5.263" height="14.78" fill="#deeefe"/><rect x="923.35" y="556.16" width="3.95" height="14.78" fill="#92c6fa"/><rect x="922.69" y="544.34" width="5.263" height="11.82" fill="#fff8dc"/><rect x="923.35" y="544.34" width="3.95" height="11.82" fill="#ffe88b"/><rect x="927.95" y="570.93" width="5.263" height="8.87" fill="#c1dcf6"/><rect x="928.61" y="570.93" width="3.95" height="8.87" fill="#2f8be2"/><rect x="927.95" y="565.02" width="5.263" height="5.91" fill="#deeefe"/><rect x="928.61" y="565.02" width="3.95" height="5.91" fill="#92c6fa"/><rect x="927.95" y="556.16" width="5.263" height="8.87" fill="#fff8dc"/><rect x="928.61" y="556.16" width="3.95" height="8.87" fill="#ffe88b"/><rect x="933.21" y="570.93" width="5.263" height="8.87" fill="#c1dcf6"/><rect x="933.87" y="570.93" width="3.95" height="8.87" fill="#2f8be2"/><rect x="933.21" y="544.34" width="5.263" height="26.59" fill="#deeefe"/><rect x="933.87" y="544.34" width="3.95" height="26.59" fill="#92c6fa"/><rect x="933.21" y="534.00" width="5.263" height="10.34" fill="#fff8dc"/><rect x="933.87" y="534.00" width="3.95" height="10.34" fill="#ffe88b"/><rect x="938.48" y="576.84" width="5.263" height="2.96" fill="#deeefe"/><rect x="939.14" y="576.84" width="3.95" height="2.96" fill="#92c6fa"/><rect x="938.48" y="570.93" width="5.263" height="5.91" fill="#fff8dc"/><rect x="939.14" y="570.93" width="3.95" height="5.91" fill="#ffe88b"/></g><rect x="561" y="579.30" width="379.2" height="1.7" fill="#26355a" opacity="0.7"/><rect x="586.0" y="579.80" width="1" height="4.5" fill="#5b616c"/><text x="586.5" y="595.20" text-anchor="middle" class="ax">12:00</text><rect x="680.8" y="579.80" width="1" height="4.5" fill="#5b616c"/><text x="681.3" y="595.20" text-anchor="middle" class="ax">18:00</text><rect x="775.5" y="579.80" width="1" height="4.5" fill="#5b616c"/><text x="776" y="595.20" text-anchor="middle" class="ax">Wed 3</text><rect x="870.1" y="579.80" width="1" height="4.5" fill="#5b616c"/><text x="870.6" y="595.20" text-anchor="middle" class="ax">06:00</text></svg>
<div class="b" style="left:997.40px;top:505.00px;width:364.00px;height:17.00px;background:#eff0f5;"></div>
<span class="t" style="left:970.22px;top:503.70px;font-size:13px;color:#1c2b34;font-weight:700;-webkit-text-stroke:0;transform:scaleX(0.9838);transform-origin:0 0;">882</span>
<span class="t" style="left:1004.20px;top:503.70px;font-size:13px;color:#1c2b34;transform:scaleX(1.0376);transform-origin:0 0;">/cart</span>
<div class="b" style="left:75.50px;top:637.00px;width:100.50px;height:20.00px;background:#eaf4fd;border-radius:3px;"></div>
<span class="t" style="left:106.44px;top:637.49px;font-size:11px;color:#1464b4;font-weight:700;-webkit-text-stroke:0;transform:scaleX(0.9457);transform-origin:0 0;">ACTIVE</span>
<span class="t" style="left:205.76px;top:638.63px;font-size:15.5px;color:#1c2b34;transform:scaleX(1.0275);transform-origin:0 0;">new_checkout_flow</span>
<div class="b" style="left:207.00px;top:671.90px;width:11.40px;height:11.40px;background:#6f5fe1;border-radius:3.5px;"></div>
<span class="t" style="left:222.09px;top:667.50px;font-size:13px;color:#1c2b34;letter-spacing:0.452px;transform:scaleX(1.1000);transform-origin:0 0;">true</span>
<span class="t" style="left:251.19px;top:667.50px;font-size:13px;color:#5f6671;transform:scaleX(1.0337);transform-origin:0 0;">(26%)</span>
<div class="b" style="left:298.90px;top:671.90px;width:11.40px;height:11.40px;background:#92c6fa;border-radius:3.5px;"></div>
<span class="t" style="left:313.79px;top:667.50px;font-size:13px;color:#1c2b34;transform:scaleX(1.0668);transform-origin:0 0;">false</span>
<span class="t" style="left:346.71px;top:667.50px;font-size:13px;color:#5f6671;transform:scaleX(1.0125);transform-origin:0 0;">(74%)</span>
<svg class="b" style="left:520px;top:613px" width="440" height="117" viewBox="520 613 440 117"><clipPath id="c613"><rect x="561" y="613" width="379.2" height="83.79999999999995"/></clipPath><text x="557.8" y="700.60" text-anchor="end" class="ax">0</text><rect x="561" y="666.75" width="379" height="1" fill="#ececf0"/><text x="557.8" y="671.05" text-anchor="end" class="ax">10</text><rect x="561" y="637.20" width="379" height="1" fill="#ececf0"/><text x="557.8" y="641.50" text-anchor="end" class="ax">20</text><g clip-path="url(#c613)"><rect x="559.54" y="684.98" width="5.263" height="11.82" fill="#d4cff6"/><rect x="560.20" y="684.98" width="3.95" height="11.82" fill="#6f5fe1"/><rect x="559.54" y="649.52" width="5.263" height="35.46" fill="#deeefe"/><rect x="560.20" y="649.52" width="3.95" height="35.46" fill="#92c6fa"/><rect x="564.80" y="684.98" width="5.263" height="11.82" fill="#d4cff6"/><rect x="565.46" y="684.98" width="3.95" height="11.82" fill="#6f5fe1"/><rect x="564.80" y="664.29" width="5.263" height="20.69" fill="#deeefe"/><rect x="565.46" y="664.29" width="3.95" height="20.69" fill="#92c6fa"/><rect x="570.07" y="687.93" width="5.263" height="8.87" fill="#d4cff6"/><rect x="570.73" y="687.93" width="3.95" height="8.87" fill="#6f5fe1"/><rect x="570.07" y="658.38" width="5.263" height="29.55" fill="#deeefe"/><rect x="570.73" y="658.38" width="3.95" height="29.55" fill="#92c6fa"/><rect x="575.33" y="676.12" width="5.263" height="20.69" fill="#d4cff6"/><rect x="575.99" y="676.12" width="3.95" height="20.69" fill="#6f5fe1"/><rect x="575.33" y="652.47" width="5.263" height="23.64" fill="#deeefe"/><rect x="575.99" y="652.47" width="3.95" height="23.64" fill="#92c6fa"/><rect x="580.59" y="673.16" width="5.263" height="23.64" fill="#deeefe"/><rect x="581.25" y="673.16" width="3.95" height="23.64" fill="#92c6fa"/><rect x="585.86" y="690.89" width="5.263" height="5.91" fill="#d4cff6"/><rect x="586.52" y="690.89" width="3.95" height="5.91" fill="#6f5fe1"/><rect x="585.86" y="643.61" width="5.263" height="47.28" fill="#deeefe"/><rect x="586.52" y="643.61" width="3.95" height="47.28" fill="#92c6fa"/><rect x="591.12" y="676.12" width="5.263" height="20.69" fill="#d4cff6"/><rect x="591.78" y="676.12" width="3.95" height="20.69" fill="#6f5fe1"/><rect x="591.12" y="658.38" width="5.263" height="17.73" fill="#deeefe"/><rect x="591.78" y="658.38" width="3.95" height="17.73" fill="#92c6fa"/><rect x="596.38" y="690.89" width="5.263" height="5.91" fill="#d4cff6"/><rect x="597.04" y="690.89" width="3.95" height="5.91" fill="#6f5fe1"/><rect x="596.38" y="658.38" width="5.263" height="32.51" fill="#deeefe"/><rect x="597.04" y="658.38" width="3.95" height="32.51" fill="#92c6fa"/><rect x="601.64" y="679.07" width="5.263" height="17.73" fill="#d4cff6"/><rect x="602.30" y="679.07" width="3.95" height="17.73" fill="#6f5fe1"/><rect x="601.64" y="646.56" width="5.263" height="32.51" fill="#deeefe"/><rect x="602.30" y="646.56" width="3.95" height="32.51" fill="#92c6fa"/><rect x="606.91" y="670.20" width="5.263" height="26.59" fill="#d4cff6"/><rect x="607.57" y="670.20" width="3.95" height="26.59" fill="#6f5fe1"/><rect x="606.91" y="637.70" width="5.263" height="32.51" fill="#deeefe"/><rect x="607.57" y="637.70" width="3.95" height="32.51" fill="#92c6fa"/><rect x="612.17" y="693.84" width="5.263" height="2.96" fill="#d4cff6"/><rect x="612.83" y="693.84" width="3.95" height="2.96" fill="#6f5fe1"/><rect x="612.17" y="655.43" width="5.263" height="38.41" fill="#deeefe"/><rect x="612.83" y="655.43" width="3.95" height="38.41" fill="#92c6fa"/><rect x="617.43" y="682.02" width="5.263" height="14.78" fill="#deeefe"/><rect x="618.09" y="682.02" width="3.95" height="14.78" fill="#92c6fa"/><rect x="622.70" y="684.98" width="5.263" height="11.82" fill="#d4cff6"/><rect x="623.36" y="684.98" width="3.95" height="11.82" fill="#6f5fe1"/><rect x="622.70" y="649.52" width="5.263" height="35.46" fill="#deeefe"/><rect x="623.36" y="649.52" width="3.95" height="35.46" fill="#92c6fa"/><rect x="627.96" y="693.84" width="5.263" height="2.96" fill="#d4cff6"/><rect x="628.62" y="693.84" width="3.95" height="2.96" fill="#6f5fe1"/><rect x="627.96" y="667.25" width="5.263" height="26.59" fill="#deeefe"/><rect x="628.62" y="667.25" width="3.95" height="26.59" fill="#92c6fa"/><rect x="633.22" y="679.07" width="5.263" height="17.73" fill="#d4cff6"/><rect x="633.88" y="679.07" width="3.95" height="17.73" fill="#6f5fe1"/><rect x="633.22" y="649.52" width="5.263" height="29.55" fill="#deeefe"/><rect x="633.88" y="649.52" width="3.95" height="29.55" fill="#92c6fa"/><rect x="638.49" y="682.02" width="5.263" height="14.78" fill="#d4cff6"/><rect x="639.14" y="682.02" width="3.95" height="14.78" fill="#6f5fe1"/><rect x="638.49" y="658.38" width="5.263" height="23.64" fill="#deeefe"/><rect x="639.14" y="658.38" width="3.95" height="23.64" fill="#92c6fa"/><rect x="643.75" y="682.02" width="5.263" height="14.78" fill="#d4cff6"/><rect x="644.41" y="682.02" width="3.95" height="14.78" fill="#6f5fe1"/><rect x="643.75" y="655.43" width="5.263" height="26.59" fill="#deeefe"/><rect x="644.41" y="655.43" width="3.95" height="26.59" fill="#92c6fa"/><rect x="649.01" y="684.98" width="5.263" height="11.82" fill="#d4cff6"/><rect x="649.67" y="684.98" width="3.95" height="11.82" fill="#6f5fe1"/><rect x="649.01" y="673.16" width="5.263" height="11.82" fill="#deeefe"/><rect x="649.67" y="673.16" width="3.95" height="11.82" fill="#92c6fa"/><rect x="654.27" y="687.93" width="5.263" height="8.87" fill="#d4cff6"/><rect x="654.93" y="687.93" width="3.95" height="8.87" fill="#6f5fe1"/><rect x="654.27" y="655.43" width="5.263" height="32.51" fill="#deeefe"/><rect x="654.93" y="655.43" width="3.95" height="32.51" fill="#92c6fa"/><rect x="659.54" y="693.84" width="5.263" height="2.96" fill="#d4cff6"/><rect x="660.20" y="693.84" width="3.95" height="2.96" fill="#6f5fe1"/><rect x="659.54" y="670.20" width="5.263" height="23.64" fill="#deeefe"/><rect x="660.20" y="670.20" width="3.95" height="23.64" fill="#92c6fa"/><rect x="664.80" y="679.07" width="5.263" height="17.73" fill="#d4cff6"/><rect x="665.46" y="679.07" width="3.95" height="17.73" fill="#6f5fe1"/><rect x="664.80" y="649.52" width="5.263" height="29.55" fill="#deeefe"/><rect x="665.46" y="649.52" width="3.95" height="29.55" fill="#92c6fa"/><rect x="670.06" y="687.93" width="5.263" height="8.87" fill="#d4cff6"/><rect x="670.72" y="687.93" width="3.95" height="8.87" fill="#6f5fe1"/><rect x="670.06" y="655.43" width="5.263" height="32.51" fill="#deeefe"/><rect x="670.72" y="655.43" width="3.95" height="32.51" fill="#92c6fa"/><rect x="675.33" y="687.93" width="5.263" height="8.87" fill="#d4cff6"/><rect x="675.99" y="687.93" width="3.95" height="8.87" fill="#6f5fe1"/><rect x="675.33" y="673.16" width="5.263" height="14.78" fill="#deeefe"/><rect x="675.99" y="673.16" width="3.95" height="14.78" fill="#92c6fa"/><rect x="680.59" y="676.12" width="5.263" height="20.69" fill="#d4cff6"/><rect x="681.25" y="676.12" width="3.95" height="20.69" fill="#6f5fe1"/><rect x="680.59" y="661.34" width="5.263" height="14.78" fill="#deeefe"/><rect x="681.25" y="661.34" width="3.95" height="14.78" fill="#92c6fa"/><rect x="685.85" y="684.98" width="5.263" height="11.82" fill="#d4cff6"/><rect x="686.51" y="684.98" width="3.95" height="11.82" fill="#6f5fe1"/><rect x="685.85" y="646.56" width="5.263" height="38.41" fill="#deeefe"/><rect x="686.51" y="646.56" width="3.95" height="38.41" fill="#92c6fa"/><rect x="691.12" y="690.89" width="5.263" height="5.91" fill="#d4cff6"/><rect x="691.78" y="690.89" width="3.95" height="5.91" fill="#6f5fe1"/><rect x="691.12" y="676.12" width="5.263" height="14.78" fill="#deeefe"/><rect x="691.78" y="676.12" width="3.95" height="14.78" fill="#92c6fa"/><rect x="696.38" y="652.47" width="5.263" height="44.33" fill="#deeefe"/><rect x="697.04" y="652.47" width="3.95" height="44.33" fill="#92c6fa"/><rect x="701.64" y="655.43" width="5.263" height="41.37" fill="#deeefe"/><rect x="702.30" y="655.43" width="3.95" height="41.37" fill="#92c6fa"/><rect x="706.90" y="693.84" width="5.263" height="2.96" fill="#d4cff6"/><rect x="707.56" y="693.84" width="3.95" height="2.96" fill="#6f5fe1"/><rect x="706.90" y="652.47" width="5.263" height="41.37" fill="#deeefe"/><rect x="707.56" y="652.47" width="3.95" height="41.37" fill="#92c6fa"/><rect x="712.17" y="693.84" width="5.263" height="2.96" fill="#d4cff6"/><rect x="712.83" y="693.84" width="3.95" height="2.96" fill="#6f5fe1"/><rect x="712.17" y="658.38" width="5.263" height="35.46" fill="#deeefe"/><rect x="712.83" y="658.38" width="3.95" height="35.46" fill="#92c6fa"/><rect x="717.43" y="690.89" width="5.263" height="5.91" fill="#d4cff6"/><rect x="718.09" y="690.89" width="3.95" height="5.91" fill="#6f5fe1"/><rect x="717.43" y="655.43" width="5.263" height="35.46" fill="#deeefe"/><rect x="718.09" y="655.43" width="3.95" height="35.46" fill="#92c6fa"/><rect x="722.69" y="676.12" width="5.263" height="20.69" fill="#deeefe"/><rect x="723.35" y="676.12" width="3.95" height="20.69" fill="#92c6fa"/><rect x="727.96" y="687.93" width="5.263" height="8.87" fill="#d4cff6"/><rect x="728.62" y="687.93" width="3.95" height="8.87" fill="#6f5fe1"/><rect x="727.96" y="652.47" width="5.263" height="35.46" fill="#deeefe"/><rect x="728.62" y="652.47" width="3.95" height="35.46" fill="#92c6fa"/><rect x="733.22" y="687.93" width="5.263" height="8.87" fill="#d4cff6"/><rect x="733.88" y="687.93" width="3.95" height="8.87" fill="#6f5fe1"/><rect x="733.22" y="649.52" width="5.263" height="38.41" fill="#deeefe"/><rect x="733.88" y="649.52" width="3.95" height="38.41" fill="#92c6fa"/><rect x="738.48" y="673.16" width="5.263" height="23.64" fill="#deeefe"/><rect x="739.14" y="673.16" width="3.95" height="23.64" fill="#92c6fa"/><rect x="743.75" y="687.93" width="5.263" height="8.87" fill="#d4cff6"/><rect x="744.40" y="687.93" width="3.95" height="8.87" fill="#6f5fe1"/><rect x="743.75" y="667.25" width="5.263" height="20.69" fill="#deeefe"/><rect x="744.40" y="667.25" width="3.95" height="20.69" fill="#92c6fa"/><rect x="749.01" y="690.89" width="5.263" height="5.91" fill="#d4cff6"/><rect x="749.67" y="690.89" width="3.95" height="5.91" fill="#6f5fe1"/><rect x="749.01" y="664.29" width="5.263" height="26.59" fill="#deeefe"/><rect x="749.67" y="664.29" width="3.95" height="26.59" fill="#92c6fa"/><rect x="754.27" y="684.98" width="5.263" height="11.82" fill="#d4cff6"/><rect x="754.93" y="684.98" width="3.95" height="11.82" fill="#6f5fe1"/><rect x="754.27" y="673.16" width="5.263" height="11.82" fill="#deeefe"/><rect x="754.93" y="673.16" width="3.95" height="11.82" fill="#92c6fa"/><rect x="759.53" y="687.93" width="5.263" height="8.87" fill="#d4cff6"/><rect x="760.19" y="687.93" width="3.95" height="8.87" fill="#6f5fe1"/><rect x="759.53" y="652.47" width="5.263" height="35.46" fill="#deeefe"/><rect x="760.19" y="652.47" width="3.95" height="35.46" fill="#92c6fa"/><rect x="764.80" y="687.93" width="5.263" height="8.87" fill="#d4cff6"/><rect x="765.46" y="687.93" width="3.95" height="8.87" fill="#6f5fe1"/><rect x="764.80" y="658.38" width="5.263" height="29.55" fill="#deeefe"/><rect x="765.46" y="658.38" width="3.95" height="29.55" fill="#92c6fa"/><rect x="770.06" y="687.93" width="5.263" height="8.87" fill="#d4cff6"/><rect x="770.72" y="687.93" width="3.95" height="8.87" fill="#6f5fe1"/><rect x="770.06" y="670.20" width="5.263" height="17.73" fill="#deeefe"/><rect x="770.72" y="670.20" width="3.95" height="17.73" fill="#92c6fa"/><rect x="775.32" y="690.89" width="5.263" height="5.91" fill="#d4cff6"/><rect x="775.98" y="690.89" width="3.95" height="5.91" fill="#6f5fe1"/><rect x="775.32" y="655.43" width="5.263" height="35.46" fill="#deeefe"/><rect x="775.98" y="655.43" width="3.95" height="35.46" fill="#92c6fa"/><rect x="780.59" y="679.07" width="5.263" height="17.73" fill="#d4cff6"/><rect x="781.25" y="679.07" width="3.95" height="17.73" fill="#6f5fe1"/><rect x="780.59" y="652.47" width="5.263" height="26.59" fill="#deeefe"/><rect x="781.25" y="652.47" width="3.95" height="26.59" fill="#92c6fa"/><rect x="785.85" y="682.02" width="5.263" height="14.78" fill="#d4cff6"/><rect x="786.51" y="682.02" width="3.95" height="14.78" fill="#6f5fe1"/><rect x="785.85" y="661.34" width="5.263" height="20.69" fill="#deeefe"/><rect x="786.51" y="661.34" width="3.95" height="20.69" fill="#92c6fa"/><rect x="791.11" y="682.02" width="5.263" height="14.78" fill="#d4cff6"/><rect x="791.77" y="682.02" width="3.95" height="14.78" fill="#6f5fe1"/><rect x="791.11" y="658.38" width="5.263" height="23.64" fill="#deeefe"/><rect x="791.77" y="658.38" width="3.95" height="23.64" fill="#92c6fa"/><rect x="796.38" y="679.07" width="5.263" height="17.73" fill="#d4cff6"/><rect x="797.04" y="679.07" width="3.95" height="17.73" fill="#6f5fe1"/><rect x="796.38" y="652.47" width="5.263" height="26.59" fill="#deeefe"/><rect x="797.04" y="652.47" width="3.95" height="26.59" fill="#92c6fa"/><rect x="801.64" y="687.93" width="5.263" height="8.87" fill="#d4cff6"/><rect x="802.30" y="687.93" width="3.95" height="8.87" fill="#6f5fe1"/><rect x="801.64" y="673.16" width="5.263" height="14.78" fill="#deeefe"/><rect x="802.30" y="673.16" width="3.95" height="14.78" fill="#92c6fa"/><rect x="806.90" y="690.89" width="5.263" height="5.91" fill="#d4cff6"/><rect x="807.56" y="690.89" width="3.95" height="5.91" fill="#6f5fe1"/><rect x="806.90" y="664.29" width="5.263" height="26.59" fill="#deeefe"/><rect x="807.56" y="664.29" width="3.95" height="26.59" fill="#92c6fa"/><rect x="812.16" y="684.98" width="5.263" height="11.82" fill="#d4cff6"/><rect x="812.82" y="684.98" width="3.95" height="11.82" fill="#6f5fe1"/><rect x="812.16" y="655.43" width="5.263" height="29.55" fill="#deeefe"/><rect x="812.82" y="655.43" width="3.95" height="29.55" fill="#92c6fa"/><rect x="817.43" y="690.89" width="5.263" height="5.91" fill="#d4cff6"/><rect x="818.09" y="690.89" width="3.95" height="5.91" fill="#6f5fe1"/><rect x="817.43" y="670.20" width="5.263" height="20.69" fill="#deeefe"/><rect x="818.09" y="670.20" width="3.95" height="20.69" fill="#92c6fa"/><rect x="822.69" y="684.98" width="5.263" height="11.82" fill="#d4cff6"/><rect x="823.35" y="684.98" width="3.95" height="11.82" fill="#6f5fe1"/><rect x="822.69" y="649.52" width="5.263" height="35.46" fill="#deeefe"/><rect x="823.35" y="649.52" width="3.95" height="35.46" fill="#92c6fa"/><rect x="827.95" y="682.02" width="5.263" height="14.78" fill="#d4cff6"/><rect x="828.61" y="682.02" width="3.95" height="14.78" fill="#6f5fe1"/><rect x="827.95" y="646.56" width="5.263" height="35.46" fill="#deeefe"/><rect x="828.61" y="646.56" width="3.95" height="35.46" fill="#92c6fa"/><rect x="833.22" y="690.89" width="5.263" height="5.91" fill="#d4cff6"/><rect x="833.88" y="690.89" width="3.95" height="5.91" fill="#6f5fe1"/><rect x="833.22" y="676.12" width="5.263" height="14.78" fill="#deeefe"/><rect x="833.88" y="676.12" width="3.95" height="14.78" fill="#92c6fa"/><rect x="838.48" y="687.93" width="5.263" height="8.87" fill="#d4cff6"/><rect x="839.14" y="687.93" width="3.95" height="8.87" fill="#6f5fe1"/><rect x="838.48" y="658.38" width="5.263" height="29.55" fill="#deeefe"/><rect x="839.14" y="658.38" width="3.95" height="29.55" fill="#92c6fa"/><rect x="843.74" y="682.02" width="5.263" height="14.78" fill="#d4cff6"/><rect x="844.40" y="682.02" width="3.95" height="14.78" fill="#6f5fe1"/><rect x="843.74" y="655.43" width="5.263" height="26.59" fill="#deeefe"/><rect x="844.40" y="655.43" width="3.95" height="26.59" fill="#92c6fa"/><rect x="849.00" y="693.84" width="5.263" height="2.96" fill="#d4cff6"/><rect x="849.66" y="693.84" width="3.95" height="2.96" fill="#6f5fe1"/><rect x="849.00" y="676.12" width="5.263" height="17.73" fill="#deeefe"/><rect x="849.66" y="676.12" width="3.95" height="17.73" fill="#92c6fa"/><rect x="854.27" y="679.07" width="5.263" height="17.73" fill="#d4cff6"/><rect x="854.93" y="679.07" width="3.95" height="17.73" fill="#6f5fe1"/><rect x="854.27" y="655.43" width="5.263" height="23.64" fill="#deeefe"/><rect x="854.93" y="655.43" width="3.95" height="23.64" fill="#92c6fa"/><rect x="859.53" y="684.98" width="5.263" height="11.82" fill="#d4cff6"/><rect x="860.19" y="684.98" width="3.95" height="11.82" fill="#6f5fe1"/><rect x="859.53" y="658.38" width="5.263" height="26.59" fill="#deeefe"/><rect x="860.19" y="658.38" width="3.95" height="26.59" fill="#92c6fa"/><rect x="864.79" y="684.98" width="5.263" height="11.82" fill="#d4cff6"/><rect x="865.45" y="684.98" width="3.95" height="11.82" fill="#6f5fe1"/><rect x="864.79" y="664.29" width="5.263" height="20.69" fill="#deeefe"/><rect x="865.45" y="664.29" width="3.95" height="20.69" fill="#92c6fa"/><rect x="870.06" y="684.98" width="5.263" height="11.82" fill="#d4cff6"/><rect x="870.72" y="684.98" width="3.95" height="11.82" fill="#6f5fe1"/><rect x="870.06" y="655.43" width="5.263" height="29.55" fill="#deeefe"/><rect x="870.72" y="655.43" width="3.95" height="29.55" fill="#92c6fa"/><rect x="875.32" y="687.93" width="5.263" height="8.87" fill="#d4cff6"/><rect x="875.98" y="687.93" width="3.95" height="8.87" fill="#6f5fe1"/><rect x="875.32" y="661.34" width="5.263" height="26.59" fill="#deeefe"/><rect x="875.98" y="661.34" width="3.95" height="26.59" fill="#92c6fa"/><rect x="880.58" y="693.84" width="5.263" height="2.96" fill="#d4cff6"/><rect x="881.24" y="693.84" width="3.95" height="2.96" fill="#6f5fe1"/><rect x="880.58" y="673.16" width="5.263" height="20.69" fill="#deeefe"/><rect x="881.24" y="673.16" width="3.95" height="20.69" fill="#92c6fa"/><rect x="885.85" y="690.89" width="5.263" height="5.91" fill="#d4cff6"/><rect x="886.51" y="690.89" width="3.95" height="5.91" fill="#6f5fe1"/><rect x="885.85" y="655.43" width="5.263" height="35.46" fill="#deeefe"/><rect x="886.51" y="655.43" width="3.95" height="35.46" fill="#92c6fa"/><rect x="891.11" y="693.84" width="5.263" height="2.96" fill="#d4cff6"/><rect x="891.77" y="693.84" width="3.95" height="2.96" fill="#6f5fe1"/><rect x="891.11" y="661.34" width="5.263" height="32.51" fill="#deeefe"/><rect x="891.77" y="661.34" width="3.95" height="32.51" fill="#92c6fa"/><rect x="896.37" y="690.89" width="5.263" height="5.91" fill="#d4cff6"/><rect x="897.03" y="690.89" width="3.95" height="5.91" fill="#6f5fe1"/><rect x="896.37" y="673.16" width="5.263" height="17.73" fill="#deeefe"/><rect x="897.03" y="673.16" width="3.95" height="17.73" fill="#92c6fa"/><rect x="901.64" y="687.93" width="5.263" height="8.87" fill="#d4cff6"/><rect x="902.30" y="687.93" width="3.95" height="8.87" fill="#6f5fe1"/><rect x="901.64" y="658.38" width="5.263" height="29.55" fill="#deeefe"/><rect x="902.30" y="658.38" width="3.95" height="29.55" fill="#92c6fa"/><rect x="906.90" y="687.93" width="5.263" height="8.87" fill="#d4cff6"/><rect x="907.56" y="687.93" width="3.95" height="8.87" fill="#6f5fe1"/><rect x="906.90" y="673.16" width="5.263" height="14.78" fill="#deeefe"/><rect x="907.56" y="673.16" width="3.95" height="14.78" fill="#92c6fa"/><rect x="912.16" y="687.93" width="5.263" height="8.87" fill="#deeefe"/><rect x="912.82" y="687.93" width="3.95" height="8.87" fill="#92c6fa"/><rect x="917.42" y="693.84" width="5.263" height="2.96" fill="#d4cff6"/><rect x="918.08" y="693.84" width="3.95" height="2.96" fill="#6f5fe1"/><rect x="917.42" y="658.38" width="5.263" height="35.46" fill="#deeefe"/><rect x="918.08" y="658.38" width="3.95" height="35.46" fill="#92c6fa"/><rect x="922.69" y="690.89" width="5.263" height="5.91" fill="#d4cff6"/><rect x="923.35" y="690.89" width="3.95" height="5.91" fill="#6f5fe1"/><rect x="922.69" y="661.34" width="5.263" height="29.55" fill="#deeefe"/><rect x="923.35" y="661.34" width="3.95" height="29.55" fill="#92c6fa"/><rect x="927.95" y="693.84" width="5.263" height="2.96" fill="#d4cff6"/><rect x="928.61" y="693.84" width="3.95" height="2.96" fill="#6f5fe1"/><rect x="927.95" y="673.16" width="5.263" height="20.69" fill="#deeefe"/><rect x="928.61" y="673.16" width="3.95" height="20.69" fill="#92c6fa"/><rect x="933.21" y="684.98" width="5.263" height="11.82" fill="#d4cff6"/><rect x="933.87" y="684.98" width="3.95" height="11.82" fill="#6f5fe1"/><rect x="933.21" y="651.00" width="5.263" height="33.98" fill="#deeefe"/><rect x="933.87" y="651.00" width="3.95" height="33.98" fill="#92c6fa"/><rect x="938.48" y="693.84" width="5.263" height="2.96" fill="#d4cff6"/><rect x="939.14" y="693.84" width="3.95" height="2.96" fill="#6f5fe1"/><rect x="938.48" y="687.93" width="5.263" height="5.91" fill="#deeefe"/><rect x="939.14" y="687.93" width="3.95" height="5.91" fill="#92c6fa"/></g><rect x="561" y="696.30" width="379.2" height="1.7" fill="#26355a" opacity="0.7"/><rect x="586.0" y="696.80" width="1" height="4.5" fill="#5b616c"/><text x="586.5" y="712.20" text-anchor="middle" class="ax">12:00</text><rect x="680.8" y="696.80" width="1" height="4.5" fill="#5b616c"/><text x="681.3" y="712.20" text-anchor="middle" class="ax">18:00</text><rect x="775.5" y="696.80" width="1" height="4.5" fill="#5b616c"/><text x="776" y="712.20" text-anchor="middle" class="ax">Wed 3</text><rect x="870.1" y="696.80" width="1" height="4.5" fill="#5b616c"/><text x="870.6" y="712.20" text-anchor="middle" class="ax">06:00</text></svg>
<div class="b" style="left:997.40px;top:622.00px;width:364.00px;height:17.00px;background:#eff0f5;"></div>
<span class="t" style="left:970.22px;top:620.70px;font-size:13px;color:#1c2b34;font-weight:700;-webkit-text-stroke:0;transform:scaleX(0.9808);transform-origin:0 0;">883</span>
<span class="t" style="left:1004.20px;top:620.70px;font-size:13px;color:#1c2b34;transform:scaleX(1.0376);transform-origin:0 0;">/cart</span>
<div class="b" style="left:75.50px;top:754.00px;width:100.50px;height:20.00px;background:#eaf4fd;border-radius:3px;"></div>
<span class="t" style="left:106.44px;top:754.49px;font-size:11px;color:#1464b4;font-weight:700;-webkit-text-stroke:0;transform:scaleX(0.9457);transform-origin:0 0;">ACTIVE</span>
<span class="t" style="left:206.56px;top:755.63px;font-size:15.5px;color:#1c2b34;transform:scaleX(1.0155);transform-origin:0 0;">test_ios_flag</span>
<div class="b" style="left:206.50px;top:788.90px;width:11.40px;height:11.40px;background:#f9c22e;border-radius:3.5px;"></div>
<span class="t" style="left:221.32px;top:784.50px;font-size:13px;color:#1c2b34;transform:scaleX(1.0361);transform-origin:0 0;">F</span>
<span class="t" style="left:233.22px;top:784.50px;font-size:13px;color:#5f6671;">(10%)</span>
<div class="b" style="left:280.30px;top:788.90px;width:11.40px;height:11.40px;background:#6f5fe1;border-radius:3.5px;"></div>
<span class="t" style="left:295.79px;top:784.50px;font-size:13px;color:#1c2b34;letter-spacing:0.240px;transform:scaleX(1.1000);transform-origin:0 0;">true</span>
<span class="t" style="left:324.61px;top:784.50px;font-size:13px;color:#5f6671;transform:scaleX(1.0156);transform-origin:0 0;">(44%)</span>
<div class="b" style="left:372.20px;top:788.90px;width:11.40px;height:11.40px;background:#92c6fa;border-radius:3.5px;"></div>
<span class="t" style="left:387.19px;top:784.50px;font-size:13px;color:#1c2b34;transform:scaleX(1.0706);transform-origin:0 0;">false</span>
<span class="t" style="left:420.22px;top:784.50px;font-size:13px;color:#5f6671;">(46%)</span>
<svg class="b" style="left:520px;top:730px" width="440" height="117" viewBox="520 730 440 117"><clipPath id="c730"><rect x="561" y="730" width="379.2" height="83.79999999999995"/></clipPath><text x="557.8" y="817.60" text-anchor="end" class="ax">0</text><rect x="561" y="781.86" width="379" height="1" fill="#ececf0"/><text x="557.8" y="786.16" text-anchor="end" class="ax">20</text><rect x="561" y="750.42" width="379" height="1" fill="#ececf0"/><text x="557.8" y="754.72" text-anchor="end" class="ax">40</text><g clip-path="url(#c730)"><rect x="559.54" y="798.08" width="5.263" height="15.72" fill="#d4cff6"/><rect x="560.20" y="798.08" width="3.95" height="15.72" fill="#6f5fe1"/><rect x="559.54" y="783.93" width="5.263" height="14.15" fill="#deeefe"/><rect x="560.20" y="783.93" width="3.95" height="14.15" fill="#92c6fa"/><rect x="559.54" y="780.79" width="5.263" height="3.14" fill="#fdedc0"/><rect x="560.20" y="780.79" width="3.95" height="3.14" fill="#f9c22e"/><rect x="564.80" y="799.65" width="5.263" height="14.15" fill="#d4cff6"/><rect x="565.46" y="799.65" width="3.95" height="14.15" fill="#6f5fe1"/><rect x="564.80" y="793.36" width="5.263" height="6.29" fill="#deeefe"/><rect x="565.46" y="793.36" width="3.95" height="6.29" fill="#92c6fa"/><rect x="564.80" y="790.22" width="5.263" height="3.14" fill="#fdedc0"/><rect x="565.46" y="790.22" width="3.95" height="3.14" fill="#f9c22e"/><rect x="570.07" y="791.79" width="5.263" height="22.01" fill="#d4cff6"/><rect x="570.73" y="791.79" width="3.95" height="22.01" fill="#6f5fe1"/><rect x="570.07" y="776.07" width="5.263" height="15.72" fill="#deeefe"/><rect x="570.73" y="776.07" width="3.95" height="15.72" fill="#92c6fa"/><rect x="575.33" y="798.08" width="5.263" height="15.72" fill="#d4cff6"/><rect x="575.99" y="798.08" width="3.95" height="15.72" fill="#6f5fe1"/><rect x="575.33" y="787.08" width="5.263" height="11.00" fill="#deeefe"/><rect x="575.99" y="787.08" width="3.95" height="11.00" fill="#92c6fa"/><rect x="575.33" y="782.36" width="5.263" height="4.72" fill="#fdedc0"/><rect x="575.99" y="782.36" width="3.95" height="4.72" fill="#f9c22e"/><rect x="580.59" y="790.22" width="5.263" height="23.58" fill="#d4cff6"/><rect x="581.25" y="790.22" width="3.95" height="23.58" fill="#6f5fe1"/><rect x="580.59" y="763.50" width="5.263" height="26.72" fill="#deeefe"/><rect x="581.25" y="763.50" width="3.95" height="26.72" fill="#92c6fa"/><rect x="580.59" y="758.78" width="5.263" height="4.72" fill="#fdedc0"/><rect x="581.25" y="758.78" width="3.95" height="4.72" fill="#f9c22e"/><rect x="585.86" y="798.08" width="5.263" height="15.72" fill="#d4cff6"/><rect x="586.52" y="798.08" width="3.95" height="15.72" fill="#6f5fe1"/><rect x="585.86" y="790.22" width="5.263" height="7.86" fill="#deeefe"/><rect x="586.52" y="790.22" width="3.95" height="7.86" fill="#92c6fa"/><rect x="585.86" y="782.36" width="5.263" height="7.86" fill="#fdedc0"/><rect x="586.52" y="782.36" width="3.95" height="7.86" fill="#f9c22e"/><rect x="591.12" y="798.08" width="5.263" height="15.72" fill="#d4cff6"/><rect x="591.78" y="798.08" width="3.95" height="15.72" fill="#6f5fe1"/><rect x="591.12" y="785.50" width="5.263" height="12.58" fill="#deeefe"/><rect x="591.78" y="785.50" width="3.95" height="12.58" fill="#92c6fa"/><rect x="591.12" y="780.79" width="5.263" height="4.72" fill="#fdedc0"/><rect x="591.78" y="780.79" width="3.95" height="4.72" fill="#f9c22e"/><rect x="596.38" y="798.08" width="5.263" height="15.72" fill="#d4cff6"/><rect x="597.04" y="798.08" width="3.95" height="15.72" fill="#6f5fe1"/><rect x="596.38" y="779.22" width="5.263" height="18.86" fill="#deeefe"/><rect x="597.04" y="779.22" width="3.95" height="18.86" fill="#92c6fa"/><rect x="596.38" y="776.07" width="5.263" height="3.14" fill="#fdedc0"/><rect x="597.04" y="776.07" width="3.95" height="3.14" fill="#f9c22e"/><rect x="601.64" y="798.08" width="5.263" height="15.72" fill="#d4cff6"/><rect x="602.30" y="798.08" width="3.95" height="15.72" fill="#6f5fe1"/><rect x="601.64" y="783.93" width="5.263" height="14.15" fill="#deeefe"/><rect x="602.30" y="783.93" width="3.95" height="14.15" fill="#92c6fa"/><rect x="601.64" y="780.79" width="5.263" height="3.14" fill="#fdedc0"/><rect x="602.30" y="780.79" width="3.95" height="3.14" fill="#f9c22e"/><rect x="606.91" y="798.08" width="5.263" height="15.72" fill="#d4cff6"/><rect x="607.57" y="798.08" width="3.95" height="15.72" fill="#6f5fe1"/><rect x="606.91" y="785.50" width="5.263" height="12.58" fill="#deeefe"/><rect x="607.57" y="785.50" width="3.95" height="12.58" fill="#92c6fa"/><rect x="606.91" y="779.22" width="5.263" height="6.29" fill="#fdedc0"/><rect x="607.57" y="779.22" width="3.95" height="6.29" fill="#f9c22e"/><rect x="612.17" y="801.22" width="5.263" height="12.58" fill="#d4cff6"/><rect x="612.83" y="801.22" width="3.95" height="12.58" fill="#6f5fe1"/><rect x="612.17" y="794.94" width="5.263" height="6.29" fill="#deeefe"/><rect x="612.83" y="794.94" width="3.95" height="6.29" fill="#92c6fa"/><rect x="612.17" y="791.79" width="5.263" height="3.14" fill="#fdedc0"/><rect x="612.83" y="791.79" width="3.95" height="3.14" fill="#f9c22e"/><rect x="617.43" y="791.79" width="5.263" height="22.01" fill="#d4cff6"/><rect x="618.09" y="791.79" width="3.95" height="22.01" fill="#6f5fe1"/><rect x="617.43" y="777.64" width="5.263" height="14.15" fill="#deeefe"/><rect x="618.09" y="777.64" width="3.95" height="14.15" fill="#92c6fa"/><rect x="617.43" y="774.50" width="5.263" height="3.14" fill="#fdedc0"/><rect x="618.09" y="774.50" width="3.95" height="3.14" fill="#f9c22e"/><rect x="622.70" y="798.08" width="5.263" height="15.72" fill="#d4cff6"/><rect x="623.36" y="798.08" width="3.95" height="15.72" fill="#6f5fe1"/><rect x="622.70" y="791.79" width="5.263" height="6.29" fill="#deeefe"/><rect x="623.36" y="791.79" width="3.95" height="6.29" fill="#92c6fa"/><rect x="622.70" y="790.22" width="5.263" height="1.57" fill="#fdedc0"/><rect x="623.36" y="790.22" width="3.95" height="1.57" fill="#f9c22e"/><rect x="627.96" y="790.22" width="5.263" height="23.58" fill="#d4cff6"/><rect x="628.62" y="790.22" width="3.95" height="23.58" fill="#6f5fe1"/><rect x="627.96" y="765.07" width="5.263" height="25.15" fill="#deeefe"/><rect x="628.62" y="765.07" width="3.95" height="25.15" fill="#92c6fa"/><rect x="627.96" y="761.92" width="5.263" height="3.14" fill="#fdedc0"/><rect x="628.62" y="761.92" width="3.95" height="3.14" fill="#f9c22e"/><rect x="633.22" y="796.51" width="5.263" height="17.29" fill="#d4cff6"/><rect x="633.88" y="796.51" width="3.95" height="17.29" fill="#6f5fe1"/><rect x="633.22" y="771.36" width="5.263" height="25.15" fill="#deeefe"/><rect x="633.88" y="771.36" width="3.95" height="25.15" fill="#92c6fa"/><rect x="633.22" y="766.64" width="5.263" height="4.72" fill="#fdedc0"/><rect x="633.88" y="766.64" width="3.95" height="4.72" fill="#f9c22e"/><rect x="638.49" y="798.08" width="5.263" height="15.72" fill="#d4cff6"/><rect x="639.14" y="798.08" width="3.95" height="15.72" fill="#6f5fe1"/><rect x="638.49" y="785.50" width="5.263" height="12.58" fill="#deeefe"/><rect x="639.14" y="785.50" width="3.95" height="12.58" fill="#92c6fa"/><rect x="638.49" y="782.36" width="5.263" height="3.14" fill="#fdedc0"/><rect x="639.14" y="782.36" width="3.95" height="3.14" fill="#f9c22e"/><rect x="643.75" y="798.08" width="5.263" height="15.72" fill="#d4cff6"/><rect x="644.41" y="798.08" width="3.95" height="15.72" fill="#6f5fe1"/><rect x="643.75" y="782.36" width="5.263" height="15.72" fill="#deeefe"/><rect x="644.41" y="782.36" width="3.95" height="15.72" fill="#92c6fa"/><rect x="643.75" y="779.22" width="5.263" height="3.14" fill="#fdedc0"/><rect x="644.41" y="779.22" width="3.95" height="3.14" fill="#f9c22e"/><rect x="649.01" y="799.65" width="5.263" height="14.15" fill="#d4cff6"/><rect x="649.67" y="799.65" width="3.95" height="14.15" fill="#6f5fe1"/><rect x="649.01" y="790.22" width="5.263" height="9.43" fill="#deeefe"/><rect x="649.67" y="790.22" width="3.95" height="9.43" fill="#92c6fa"/><rect x="649.01" y="788.65" width="5.263" height="1.57" fill="#fdedc0"/><rect x="649.67" y="788.65" width="3.95" height="1.57" fill="#f9c22e"/><rect x="654.27" y="799.65" width="5.263" height="14.15" fill="#d4cff6"/><rect x="654.93" y="799.65" width="3.95" height="14.15" fill="#6f5fe1"/><rect x="654.27" y="788.65" width="5.263" height="11.00" fill="#deeefe"/><rect x="654.93" y="788.65" width="3.95" height="11.00" fill="#92c6fa"/><rect x="654.27" y="783.93" width="5.263" height="4.72" fill="#fdedc0"/><rect x="654.93" y="783.93" width="3.95" height="4.72" fill="#f9c22e"/><rect x="659.54" y="801.22" width="5.263" height="12.58" fill="#d4cff6"/><rect x="660.20" y="801.22" width="3.95" height="12.58" fill="#6f5fe1"/><rect x="659.54" y="794.94" width="5.263" height="6.29" fill="#deeefe"/><rect x="660.20" y="794.94" width="3.95" height="6.29" fill="#92c6fa"/><rect x="659.54" y="790.22" width="5.263" height="4.72" fill="#fdedc0"/><rect x="660.20" y="790.22" width="3.95" height="4.72" fill="#f9c22e"/><rect x="664.80" y="796.51" width="5.263" height="17.29" fill="#d4cff6"/><rect x="665.46" y="796.51" width="3.95" height="17.29" fill="#6f5fe1"/><rect x="664.80" y="779.22" width="5.263" height="17.29" fill="#deeefe"/><rect x="665.46" y="779.22" width="3.95" height="17.29" fill="#92c6fa"/><rect x="664.80" y="772.93" width="5.263" height="6.29" fill="#fdedc0"/><rect x="665.46" y="772.93" width="3.95" height="6.29" fill="#f9c22e"/><rect x="670.06" y="794.94" width="5.263" height="18.86" fill="#d4cff6"/><rect x="670.72" y="794.94" width="3.95" height="18.86" fill="#6f5fe1"/><rect x="670.06" y="774.50" width="5.263" height="20.44" fill="#deeefe"/><rect x="670.72" y="774.50" width="3.95" height="20.44" fill="#92c6fa"/><rect x="670.06" y="768.21" width="5.263" height="6.29" fill="#fdedc0"/><rect x="670.72" y="768.21" width="3.95" height="6.29" fill="#f9c22e"/><rect x="675.33" y="793.36" width="5.263" height="20.44" fill="#d4cff6"/><rect x="675.99" y="793.36" width="3.95" height="20.44" fill="#6f5fe1"/><rect x="675.33" y="774.50" width="5.263" height="18.86" fill="#deeefe"/><rect x="675.99" y="774.50" width="3.95" height="18.86" fill="#92c6fa"/><rect x="675.33" y="769.78" width="5.263" height="4.72" fill="#fdedc0"/><rect x="675.99" y="769.78" width="3.95" height="4.72" fill="#f9c22e"/><rect x="680.59" y="798.08" width="5.263" height="15.72" fill="#d4cff6"/><rect x="681.25" y="798.08" width="3.95" height="15.72" fill="#6f5fe1"/><rect x="680.59" y="785.50" width="5.263" height="12.58" fill="#deeefe"/><rect x="681.25" y="785.50" width="3.95" height="12.58" fill="#92c6fa"/><rect x="680.59" y="780.79" width="5.263" height="4.72" fill="#fdedc0"/><rect x="681.25" y="780.79" width="3.95" height="4.72" fill="#f9c22e"/><rect x="685.85" y="796.51" width="5.263" height="17.29" fill="#d4cff6"/><rect x="686.51" y="796.51" width="3.95" height="17.29" fill="#6f5fe1"/><rect x="685.85" y="777.64" width="5.263" height="18.86" fill="#deeefe"/><rect x="686.51" y="777.64" width="3.95" height="18.86" fill="#92c6fa"/><rect x="685.85" y="774.50" width="5.263" height="3.14" fill="#fdedc0"/><rect x="686.51" y="774.50" width="3.95" height="3.14" fill="#f9c22e"/><rect x="691.12" y="798.08" width="5.263" height="15.72" fill="#d4cff6"/><rect x="691.78" y="798.08" width="3.95" height="15.72" fill="#6f5fe1"/><rect x="691.12" y="785.50" width="5.263" height="12.58" fill="#deeefe"/><rect x="691.78" y="785.50" width="3.95" height="12.58" fill="#92c6fa"/><rect x="696.38" y="791.79" width="5.263" height="22.01" fill="#d4cff6"/><rect x="697.04" y="791.79" width="3.95" height="22.01" fill="#6f5fe1"/><rect x="696.38" y="776.07" width="5.263" height="15.72" fill="#deeefe"/><rect x="697.04" y="776.07" width="3.95" height="15.72" fill="#92c6fa"/><rect x="696.38" y="772.93" width="5.263" height="3.14" fill="#fdedc0"/><rect x="697.04" y="772.93" width="3.95" height="3.14" fill="#f9c22e"/><rect x="701.64" y="799.65" width="5.263" height="14.15" fill="#d4cff6"/><rect x="702.30" y="799.65" width="3.95" height="14.15" fill="#6f5fe1"/><rect x="701.64" y="788.65" width="5.263" height="11.00" fill="#deeefe"/><rect x="702.30" y="788.65" width="3.95" height="11.00" fill="#92c6fa"/><rect x="701.64" y="783.93" width="5.263" height="4.72" fill="#fdedc0"/><rect x="702.30" y="783.93" width="3.95" height="4.72" fill="#f9c22e"/><rect x="706.90" y="799.65" width="5.263" height="14.15" fill="#d4cff6"/><rect x="707.56" y="799.65" width="3.95" height="14.15" fill="#6f5fe1"/><rect x="706.90" y="785.50" width="5.263" height="14.15" fill="#deeefe"/><rect x="707.56" y="785.50" width="3.95" height="14.15" fill="#92c6fa"/><rect x="712.17" y="798.08" width="5.263" height="15.72" fill="#d4cff6"/><rect x="712.83" y="798.08" width="3.95" height="15.72" fill="#6f5fe1"/><rect x="712.17" y="780.79" width="5.263" height="17.29" fill="#deeefe"/><rect x="712.83" y="780.79" width="3.95" height="17.29" fill="#92c6fa"/><rect x="712.17" y="777.64" width="5.263" height="3.14" fill="#fdedc0"/><rect x="712.83" y="777.64" width="3.95" height="3.14" fill="#f9c22e"/><rect x="717.43" y="799.65" width="5.263" height="14.15" fill="#d4cff6"/><rect x="718.09" y="799.65" width="3.95" height="14.15" fill="#6f5fe1"/><rect x="717.43" y="788.65" width="5.263" height="11.00" fill="#deeefe"/><rect x="718.09" y="788.65" width="3.95" height="11.00" fill="#92c6fa"/><rect x="717.43" y="783.93" width="5.263" height="4.72" fill="#fdedc0"/><rect x="718.09" y="783.93" width="3.95" height="4.72" fill="#f9c22e"/><rect x="722.69" y="798.08" width="5.263" height="15.72" fill="#d4cff6"/><rect x="723.35" y="798.08" width="3.95" height="15.72" fill="#6f5fe1"/><rect x="722.69" y="780.79" width="5.263" height="17.29" fill="#deeefe"/><rect x="723.35" y="780.79" width="3.95" height="17.29" fill="#92c6fa"/><rect x="722.69" y="774.50" width="5.263" height="6.29" fill="#fdedc0"/><rect x="723.35" y="774.50" width="3.95" height="6.29" fill="#f9c22e"/><rect x="727.96" y="798.08" width="5.263" height="15.72" fill="#d4cff6"/><rect x="728.62" y="798.08" width="3.95" height="15.72" fill="#6f5fe1"/><rect x="727.96" y="785.50" width="5.263" height="12.58" fill="#deeefe"/><rect x="728.62" y="785.50" width="3.95" height="12.58" fill="#92c6fa"/><rect x="727.96" y="780.79" width="5.263" height="4.72" fill="#fdedc0"/><rect x="728.62" y="780.79" width="3.95" height="4.72" fill="#f9c22e"/><rect x="733.22" y="799.65" width="5.263" height="14.15" fill="#d4cff6"/><rect x="733.88" y="799.65" width="3.95" height="14.15" fill="#6f5fe1"/><rect x="733.22" y="791.01" width="5.263" height="8.65" fill="#deeefe"/><rect x="733.88" y="791.01" width="3.95" height="8.65" fill="#92c6fa"/><rect x="733.22" y="788.65" width="5.263" height="2.36" fill="#fdedc0"/><rect x="733.88" y="788.65" width="3.95" height="2.36" fill="#f9c22e"/><rect x="738.48" y="796.51" width="5.263" height="17.29" fill="#d4cff6"/><rect x="739.14" y="796.51" width="3.95" height="17.29" fill="#6f5fe1"/><rect x="738.48" y="774.50" width="5.263" height="22.01" fill="#deeefe"/><rect x="739.14" y="774.50" width="3.95" height="22.01" fill="#92c6fa"/><rect x="743.75" y="798.08" width="5.263" height="15.72" fill="#d4cff6"/><rect x="744.40" y="798.08" width="3.95" height="15.72" fill="#6f5fe1"/><rect x="743.75" y="787.08" width="5.263" height="11.00" fill="#deeefe"/><rect x="744.40" y="787.08" width="3.95" height="11.00" fill="#92c6fa"/><rect x="743.75" y="782.36" width="5.263" height="4.72" fill="#fdedc0"/><rect x="744.40" y="782.36" width="3.95" height="4.72" fill="#f9c22e"/><rect x="749.01" y="790.22" width="5.263" height="23.58" fill="#d4cff6"/><rect x="749.67" y="790.22" width="3.95" height="23.58" fill="#6f5fe1"/><rect x="749.01" y="779.22" width="5.263" height="11.00" fill="#deeefe"/><rect x="749.67" y="779.22" width="3.95" height="11.00" fill="#92c6fa"/><rect x="754.27" y="787.08" width="5.263" height="26.72" fill="#d4cff6"/><rect x="754.93" y="787.08" width="3.95" height="26.72" fill="#6f5fe1"/><rect x="754.27" y="774.50" width="5.263" height="12.58" fill="#deeefe"/><rect x="754.93" y="774.50" width="3.95" height="12.58" fill="#92c6fa"/><rect x="754.27" y="769.78" width="5.263" height="4.72" fill="#fdedc0"/><rect x="754.93" y="769.78" width="3.95" height="4.72" fill="#f9c22e"/><rect x="759.53" y="796.51" width="5.263" height="17.29" fill="#d4cff6"/><rect x="760.19" y="796.51" width="3.95" height="17.29" fill="#6f5fe1"/><rect x="759.53" y="780.00" width="5.263" height="16.51" fill="#deeefe"/><rect x="760.19" y="780.00" width="3.95" height="16.51" fill="#92c6fa"/><rect x="759.53" y="776.86" width="5.263" height="3.14" fill="#fdedc0"/><rect x="760.19" y="776.86" width="3.95" height="3.14" fill="#f9c22e"/><rect x="764.80" y="796.51" width="5.263" height="17.29" fill="#d4cff6"/><rect x="765.46" y="796.51" width="3.95" height="17.29" fill="#6f5fe1"/><rect x="764.80" y="780.00" width="5.263" height="16.51" fill="#deeefe"/><rect x="765.46" y="780.00" width="3.95" height="16.51" fill="#92c6fa"/><rect x="764.80" y="776.86" width="5.263" height="3.14" fill="#fdedc0"/><rect x="765.46" y="776.86" width="3.95" height="3.14" fill="#f9c22e"/><rect x="770.06" y="796.51" width="5.263" height="17.29" fill="#d4cff6"/><rect x="770.72" y="796.51" width="3.95" height="17.29" fill="#6f5fe1"/><rect x="770.06" y="779.22" width="5.263" height="17.29" fill="#deeefe"/><rect x="770.72" y="779.22" width="3.95" height="17.29" fill="#92c6fa"/><rect x="770.06" y="774.50" width="5.263" height="4.72" fill="#fdedc0"/><rect x="770.72" y="774.50" width="3.95" height="4.72" fill="#f9c22e"/><rect x="775.32" y="799.65" width="5.263" height="14.15" fill="#d4cff6"/><rect x="775.98" y="799.65" width="3.95" height="14.15" fill="#6f5fe1"/><rect x="775.32" y="791.79" width="5.263" height="7.86" fill="#deeefe"/><rect x="775.98" y="791.79" width="3.95" height="7.86" fill="#92c6fa"/><rect x="775.32" y="790.22" width="5.263" height="1.57" fill="#fdedc0"/><rect x="775.98" y="790.22" width="3.95" height="1.57" fill="#f9c22e"/><rect x="780.59" y="798.08" width="5.263" height="15.72" fill="#d4cff6"/><rect x="781.25" y="798.08" width="3.95" height="15.72" fill="#6f5fe1"/><rect x="780.59" y="787.08" width="5.263" height="11.00" fill="#deeefe"/><rect x="781.25" y="787.08" width="3.95" height="11.00" fill="#92c6fa"/><rect x="780.59" y="782.36" width="5.263" height="4.72" fill="#fdedc0"/><rect x="781.25" y="782.36" width="3.95" height="4.72" fill="#f9c22e"/><rect x="785.85" y="793.36" width="5.263" height="20.44" fill="#d4cff6"/><rect x="786.51" y="793.36" width="3.95" height="20.44" fill="#6f5fe1"/><rect x="785.85" y="771.36" width="5.263" height="22.01" fill="#deeefe"/><rect x="786.51" y="771.36" width="3.95" height="22.01" fill="#92c6fa"/><rect x="785.85" y="765.85" width="5.263" height="5.50" fill="#fdedc0"/><rect x="786.51" y="765.85" width="3.95" height="5.50" fill="#f9c22e"/><rect x="791.11" y="801.22" width="5.263" height="12.58" fill="#d4cff6"/><rect x="791.77" y="801.22" width="3.95" height="12.58" fill="#6f5fe1"/><rect x="791.11" y="794.94" width="5.263" height="6.29" fill="#deeefe"/><rect x="791.77" y="794.94" width="3.95" height="6.29" fill="#92c6fa"/><rect x="791.11" y="790.22" width="5.263" height="4.72" fill="#fdedc0"/><rect x="791.77" y="790.22" width="3.95" height="4.72" fill="#f9c22e"/><rect x="796.38" y="798.08" width="5.263" height="15.72" fill="#d4cff6"/><rect x="797.04" y="798.08" width="3.95" height="15.72" fill="#6f5fe1"/><rect x="796.38" y="781.57" width="5.263" height="16.51" fill="#deeefe"/><rect x="797.04" y="781.57" width="3.95" height="16.51" fill="#92c6fa"/><rect x="796.38" y="779.22" width="5.263" height="2.36" fill="#fdedc0"/><rect x="797.04" y="779.22" width="3.95" height="2.36" fill="#f9c22e"/><rect x="801.64" y="793.36" width="5.263" height="20.44" fill="#d4cff6"/><rect x="802.30" y="793.36" width="3.95" height="20.44" fill="#6f5fe1"/><rect x="801.64" y="772.93" width="5.263" height="20.44" fill="#deeefe"/><rect x="802.30" y="772.93" width="3.95" height="20.44" fill="#92c6fa"/><rect x="801.64" y="768.21" width="5.263" height="4.72" fill="#fdedc0"/><rect x="802.30" y="768.21" width="3.95" height="4.72" fill="#f9c22e"/><rect x="806.90" y="791.01" width="5.263" height="22.79" fill="#d4cff6"/><rect x="807.56" y="791.01" width="3.95" height="22.79" fill="#6f5fe1"/><rect x="806.90" y="765.85" width="5.263" height="25.15" fill="#deeefe"/><rect x="807.56" y="765.85" width="3.95" height="25.15" fill="#92c6fa"/><rect x="806.90" y="762.71" width="5.263" height="3.14" fill="#fdedc0"/><rect x="807.56" y="762.71" width="3.95" height="3.14" fill="#f9c22e"/><rect x="812.16" y="798.08" width="5.263" height="15.72" fill="#d4cff6"/><rect x="812.82" y="798.08" width="3.95" height="15.72" fill="#6f5fe1"/><rect x="812.16" y="782.36" width="5.263" height="15.72" fill="#deeefe"/><rect x="812.82" y="782.36" width="3.95" height="15.72" fill="#92c6fa"/><rect x="812.16" y="776.86" width="5.263" height="5.50" fill="#fdedc0"/><rect x="812.82" y="776.86" width="3.95" height="5.50" fill="#f9c22e"/><rect x="817.43" y="793.36" width="5.263" height="20.44" fill="#d4cff6"/><rect x="818.09" y="793.36" width="3.95" height="20.44" fill="#6f5fe1"/><rect x="817.43" y="782.36" width="5.263" height="11.00" fill="#deeefe"/><rect x="818.09" y="782.36" width="3.95" height="11.00" fill="#92c6fa"/><rect x="817.43" y="776.86" width="5.263" height="5.50" fill="#fdedc0"/><rect x="818.09" y="776.86" width="3.95" height="5.50" fill="#f9c22e"/><rect x="822.69" y="798.08" width="5.263" height="15.72" fill="#d4cff6"/><rect x="823.35" y="798.08" width="3.95" height="15.72" fill="#6f5fe1"/><rect x="822.69" y="785.50" width="5.263" height="12.58" fill="#deeefe"/><rect x="823.35" y="785.50" width="3.95" height="12.58" fill="#92c6fa"/><rect x="822.69" y="780.00" width="5.263" height="5.50" fill="#fdedc0"/><rect x="823.35" y="780.00" width="3.95" height="5.50" fill="#f9c22e"/><rect x="827.95" y="798.08" width="5.263" height="15.72" fill="#d4cff6"/><rect x="828.61" y="798.08" width="3.95" height="15.72" fill="#6f5fe1"/><rect x="827.95" y="783.15" width="5.263" height="14.93" fill="#deeefe"/><rect x="828.61" y="783.15" width="3.95" height="14.93" fill="#92c6fa"/><rect x="827.95" y="780.00" width="5.263" height="3.14" fill="#fdedc0"/><rect x="828.61" y="780.00" width="3.95" height="3.14" fill="#f9c22e"/><rect x="833.22" y="798.08" width="5.263" height="15.72" fill="#d4cff6"/><rect x="833.88" y="798.08" width="3.95" height="15.72" fill="#6f5fe1"/><rect x="833.22" y="782.36" width="5.263" height="15.72" fill="#deeefe"/><rect x="833.88" y="782.36" width="3.95" height="15.72" fill="#92c6fa"/><rect x="833.22" y="773.71" width="5.263" height="8.65" fill="#fdedc0"/><rect x="833.88" y="773.71" width="3.95" height="8.65" fill="#f9c22e"/><rect x="838.48" y="796.51" width="5.263" height="17.29" fill="#d4cff6"/><rect x="839.14" y="796.51" width="3.95" height="17.29" fill="#6f5fe1"/><rect x="838.48" y="780.00" width="5.263" height="16.51" fill="#deeefe"/><rect x="839.14" y="780.00" width="3.95" height="16.51" fill="#92c6fa"/><rect x="838.48" y="773.71" width="5.263" height="6.29" fill="#fdedc0"/><rect x="839.14" y="773.71" width="3.95" height="6.29" fill="#f9c22e"/><rect x="843.74" y="791.01" width="5.263" height="22.79" fill="#d4cff6"/><rect x="844.40" y="791.01" width="3.95" height="22.79" fill="#6f5fe1"/><rect x="843.74" y="776.07" width="5.263" height="14.93" fill="#deeefe"/><rect x="844.40" y="776.07" width="3.95" height="14.93" fill="#92c6fa"/><rect x="849.00" y="791.01" width="5.263" height="22.79" fill="#d4cff6"/><rect x="849.66" y="791.01" width="3.95" height="22.79" fill="#6f5fe1"/><rect x="849.00" y="780.00" width="5.263" height="11.00" fill="#deeefe"/><rect x="849.66" y="780.00" width="3.95" height="11.00" fill="#92c6fa"/><rect x="849.00" y="770.57" width="5.263" height="9.43" fill="#fdedc0"/><rect x="849.66" y="770.57" width="3.95" height="9.43" fill="#f9c22e"/><rect x="854.27" y="796.51" width="5.263" height="17.29" fill="#d4cff6"/><rect x="854.93" y="796.51" width="3.95" height="17.29" fill="#6f5fe1"/><rect x="854.27" y="776.07" width="5.263" height="20.44" fill="#deeefe"/><rect x="854.93" y="776.07" width="3.95" height="20.44" fill="#92c6fa"/><rect x="854.27" y="772.93" width="5.263" height="3.14" fill="#fdedc0"/><rect x="854.93" y="772.93" width="3.95" height="3.14" fill="#f9c22e"/><rect x="859.53" y="798.08" width="5.263" height="15.72" fill="#d4cff6"/><rect x="860.19" y="798.08" width="3.95" height="15.72" fill="#6f5fe1"/><rect x="859.53" y="785.50" width="5.263" height="12.58" fill="#deeefe"/><rect x="860.19" y="785.50" width="3.95" height="12.58" fill="#92c6fa"/><rect x="859.53" y="779.22" width="5.263" height="6.29" fill="#fdedc0"/><rect x="860.19" y="779.22" width="3.95" height="6.29" fill="#f9c22e"/><rect x="864.79" y="798.08" width="5.263" height="15.72" fill="#d4cff6"/><rect x="865.45" y="798.08" width="3.95" height="15.72" fill="#6f5fe1"/><rect x="864.79" y="779.22" width="5.263" height="18.86" fill="#deeefe"/><rect x="865.45" y="779.22" width="3.95" height="18.86" fill="#92c6fa"/><rect x="864.79" y="776.86" width="5.263" height="2.36" fill="#fdedc0"/><rect x="865.45" y="776.86" width="3.95" height="2.36" fill="#f9c22e"/><rect x="870.06" y="799.65" width="5.263" height="14.15" fill="#d4cff6"/><rect x="870.72" y="799.65" width="3.95" height="14.15" fill="#6f5fe1"/><rect x="870.06" y="788.65" width="5.263" height="11.00" fill="#deeefe"/><rect x="870.72" y="788.65" width="3.95" height="11.00" fill="#92c6fa"/><rect x="870.06" y="783.15" width="5.263" height="5.50" fill="#fdedc0"/><rect x="870.72" y="783.15" width="3.95" height="5.50" fill="#f9c22e"/><rect x="875.32" y="796.51" width="5.263" height="17.29" fill="#d4cff6"/><rect x="875.98" y="796.51" width="3.95" height="17.29" fill="#6f5fe1"/><rect x="875.32" y="780.00" width="5.263" height="16.51" fill="#deeefe"/><rect x="875.98" y="780.00" width="3.95" height="16.51" fill="#92c6fa"/><rect x="875.32" y="776.07" width="5.263" height="3.93" fill="#fdedc0"/><rect x="875.98" y="776.07" width="3.95" height="3.93" fill="#f9c22e"/><rect x="880.58" y="798.08" width="5.263" height="15.72" fill="#d4cff6"/><rect x="881.24" y="798.08" width="3.95" height="15.72" fill="#6f5fe1"/><rect x="880.58" y="782.36" width="5.263" height="15.72" fill="#deeefe"/><rect x="881.24" y="782.36" width="3.95" height="15.72" fill="#92c6fa"/><rect x="880.58" y="777.64" width="5.263" height="4.72" fill="#fdedc0"/><rect x="881.24" y="777.64" width="3.95" height="4.72" fill="#f9c22e"/><rect x="885.85" y="799.65" width="5.263" height="14.15" fill="#d4cff6"/><rect x="886.51" y="799.65" width="3.95" height="14.15" fill="#6f5fe1"/><rect x="885.85" y="788.65" width="5.263" height="11.00" fill="#deeefe"/><rect x="886.51" y="788.65" width="3.95" height="11.00" fill="#92c6fa"/><rect x="885.85" y="782.36" width="5.263" height="6.29" fill="#fdedc0"/><rect x="886.51" y="782.36" width="3.95" height="6.29" fill="#f9c22e"/><rect x="891.11" y="798.08" width="5.263" height="15.72" fill="#d4cff6"/><rect x="891.77" y="798.08" width="3.95" height="15.72" fill="#6f5fe1"/><rect x="891.11" y="783.15" width="5.263" height="14.93" fill="#deeefe"/><rect x="891.77" y="783.15" width="3.95" height="14.93" fill="#92c6fa"/><rect x="891.11" y="782.36" width="5.263" height="0.79" fill="#fdedc0"/><rect x="891.77" y="782.36" width="3.95" height="0.79" fill="#f9c22e"/><rect x="896.37" y="790.22" width="5.263" height="23.58" fill="#d4cff6"/><rect x="897.03" y="790.22" width="3.95" height="23.58" fill="#6f5fe1"/><rect x="896.37" y="771.36" width="5.263" height="18.86" fill="#deeefe"/><rect x="897.03" y="771.36" width="3.95" height="18.86" fill="#92c6fa"/><rect x="896.37" y="765.85" width="5.263" height="5.50" fill="#fdedc0"/><rect x="897.03" y="765.85" width="3.95" height="5.50" fill="#f9c22e"/><rect x="901.64" y="791.01" width="5.263" height="22.79" fill="#d4cff6"/><rect x="902.30" y="791.01" width="3.95" height="22.79" fill="#6f5fe1"/><rect x="901.64" y="783.93" width="5.263" height="7.07" fill="#deeefe"/><rect x="902.30" y="783.93" width="3.95" height="7.07" fill="#92c6fa"/><rect x="901.64" y="779.22" width="5.263" height="4.72" fill="#fdedc0"/><rect x="902.30" y="779.22" width="3.95" height="4.72" fill="#f9c22e"/><rect x="906.90" y="798.08" width="5.263" height="15.72" fill="#d4cff6"/><rect x="907.56" y="798.08" width="3.95" height="15.72" fill="#6f5fe1"/><rect x="906.90" y="783.15" width="5.263" height="14.93" fill="#deeefe"/><rect x="907.56" y="783.15" width="3.95" height="14.93" fill="#92c6fa"/><rect x="906.90" y="782.36" width="5.263" height="0.79" fill="#fdedc0"/><rect x="907.56" y="782.36" width="3.95" height="0.79" fill="#f9c22e"/><rect x="912.16" y="793.36" width="5.263" height="20.44" fill="#d4cff6"/><rect x="912.82" y="793.36" width="3.95" height="20.44" fill="#6f5fe1"/><rect x="912.16" y="780.00" width="5.263" height="13.36" fill="#deeefe"/><rect x="912.82" y="780.00" width="3.95" height="13.36" fill="#92c6fa"/><rect x="912.16" y="773.71" width="5.263" height="6.29" fill="#fdedc0"/><rect x="912.82" y="773.71" width="3.95" height="6.29" fill="#f9c22e"/><rect x="917.42" y="798.08" width="5.263" height="15.72" fill="#d4cff6"/><rect x="918.08" y="798.08" width="3.95" height="15.72" fill="#6f5fe1"/><rect x="917.42" y="785.50" width="5.263" height="12.58" fill="#deeefe"/><rect x="918.08" y="785.50" width="3.95" height="12.58" fill="#92c6fa"/><rect x="917.42" y="782.36" width="5.263" height="3.14" fill="#fdedc0"/><rect x="918.08" y="782.36" width="3.95" height="3.14" fill="#f9c22e"/><rect x="922.69" y="799.65" width="5.263" height="14.15" fill="#d4cff6"/><rect x="923.35" y="799.65" width="3.95" height="14.15" fill="#6f5fe1"/><rect x="922.69" y="787.86" width="5.263" height="11.79" fill="#deeefe"/><rect x="923.35" y="787.86" width="3.95" height="11.79" fill="#92c6fa"/><rect x="922.69" y="785.50" width="5.263" height="2.36" fill="#fdedc0"/><rect x="923.35" y="785.50" width="3.95" height="2.36" fill="#f9c22e"/><rect x="927.95" y="787.08" width="5.263" height="26.72" fill="#d4cff6"/><rect x="928.61" y="787.08" width="3.95" height="26.72" fill="#6f5fe1"/><rect x="927.95" y="765.85" width="5.263" height="21.22" fill="#deeefe"/><rect x="928.61" y="765.85" width="3.95" height="21.22" fill="#92c6fa"/><rect x="927.95" y="765.07" width="5.263" height="0.79" fill="#fdedc0"/><rect x="928.61" y="765.07" width="3.95" height="0.79" fill="#f9c22e"/><rect x="933.21" y="801.22" width="5.263" height="12.58" fill="#d4cff6"/><rect x="933.87" y="801.22" width="3.95" height="12.58" fill="#6f5fe1"/><rect x="933.21" y="794.94" width="5.263" height="6.29" fill="#deeefe"/><rect x="933.87" y="794.94" width="3.95" height="6.29" fill="#92c6fa"/><rect x="933.21" y="791.01" width="5.263" height="3.93" fill="#fdedc0"/><rect x="933.87" y="791.01" width="3.95" height="3.93" fill="#f9c22e"/><rect x="938.48" y="810.66" width="5.263" height="3.14" fill="#d4cff6"/><rect x="939.14" y="810.66" width="3.95" height="3.14" fill="#6f5fe1"/><rect x="938.48" y="807.51" width="5.263" height="3.14" fill="#deeefe"/><rect x="939.14" y="807.51" width="3.95" height="3.14" fill="#92c6fa"/><rect x="938.48" y="805.94" width="5.263" height="1.57" fill="#fdedc0"/><rect x="939.14" y="805.94" width="3.95" height="1.57" fill="#f9c22e"/></g><rect x="561" y="813.30" width="379.2" height="1.7" fill="#26355a" opacity="0.7"/><rect x="586.0" y="813.80" width="1" height="4.5" fill="#5b616c"/><text x="586.5" y="829.20" text-anchor="middle" class="ax">12:00</text><rect x="680.8" y="813.80" width="1" height="4.5" fill="#5b616c"/><text x="681.3" y="829.20" text-anchor="middle" class="ax">18:00</text><rect x="775.5" y="813.80" width="1" height="4.5" fill="#5b616c"/><text x="776" y="829.20" text-anchor="middle" class="ax">Wed 3</text><rect x="870.1" y="813.80" width="1" height="4.5" fill="#5b616c"/><text x="870.6" y="829.20" text-anchor="middle" class="ax">06:00</text></svg>
<div class="b" style="left:1011.30px;top:739.00px;width:350.10px;height:17.00px;background:#eff0f5;"></div>
<span class="t" style="left:972.11px;top:737.70px;font-size:13px;color:#1c2b34;font-weight:700;-webkit-text-stroke:0;transform:scaleX(1.0088);transform-origin:0 0;">1.61k</span>
<span class="t" style="left:1017.20px;top:737.70px;font-size:13px;color:#1c2b34;">ApplicationLaunch</span>
<svg class="b" id="corner-br" style="left:1392px;top:788px" width="8" height="6" viewBox="0 0 8 6"><path d="M8 6H1.5C4.6 5.6 7 4 8 1.5Z" fill="#a3401e"/></svg>
</div>
</body></html>
